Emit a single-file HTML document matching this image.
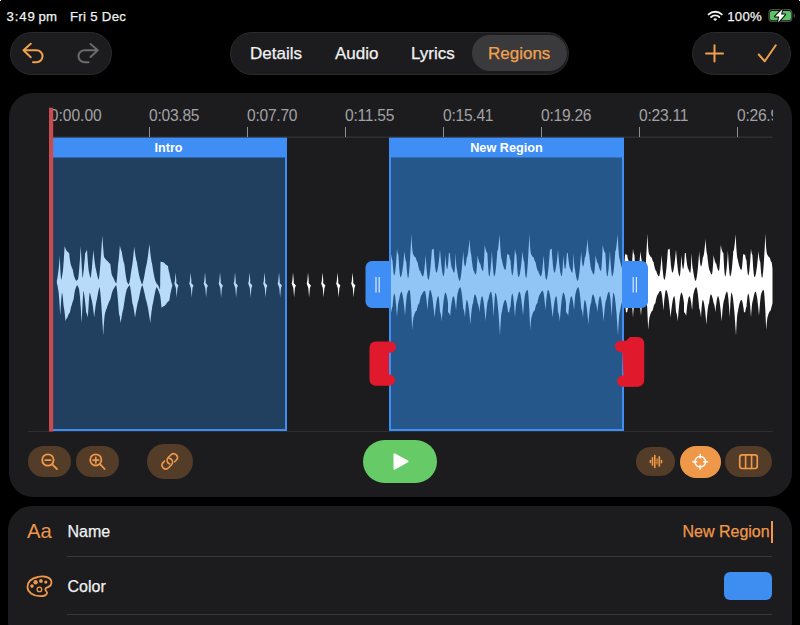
<!DOCTYPE html>
<html><head><meta charset="utf-8">
<style>
*{margin:0;padding:0;box-sizing:border-box}
html,body{width:800px;height:625px;background:#000;overflow:hidden;font-family:"Liberation Sans",sans-serif;color:#fff}
.a{position:absolute}
.pill{position:absolute;background:#1c1c1e;border:1px solid #2b2b2d;border-radius:22px}
.txt{position:absolute;white-space:nowrap;line-height:1;-webkit-text-stroke:0.25px currentColor}
.card{position:absolute;background:#1c1c1e;border-radius:24px}
.rt{position:absolute;font-size:15.6px;color:#a2a2a6;line-height:1;white-space:nowrap;letter-spacing:-0.25px}
.btn{position:absolute;background:#533c28;border-radius:16px}
svg{position:absolute;left:0;top:0}
</style></head><body>
<!-- status bar -->
<div class="txt" style="left:6.5px;top:9.7px;font-size:13.2px;color:#f2f2f2"><span style="letter-spacing:0.9px">3:49</span><span style="margin-left:2.6px;letter-spacing:0.3px">pm</span></div>
<div class="txt" style="left:70px;top:9.7px;font-size:13.2px;color:#f2f2f2;letter-spacing:0.3px">Fri 5 Dec</div>
<div class="txt" style="left:727.2px;top:9.7px;font-size:13.2px;color:#f2f2f2;letter-spacing:0.3px">100%</div>

<!-- top buttons -->
<div class="pill" style="left:10px;top:32px;width:102px;height:43px"></div>
<div class="pill" style="left:230px;top:32px;width:339px;height:43px"></div>
<div class="a" style="left:472px;top:35px;width:95px;height:36px;background:#3a3a3c;border-radius:18px"></div>
<div class="txt" style="left:250px;top:45px;font-size:17px;color:#f2f2f2">Details</div>
<div class="txt" style="left:335px;top:45px;font-size:17px;color:#f2f2f2">Audio</div>
<div class="txt" style="left:411px;top:45px;font-size:17px;color:#f2f2f2">Lyrics</div>
<div class="txt" style="left:488px;top:45px;font-size:17px;color:#f0a24e">Regions</div>
<div class="pill" style="left:692px;top:32px;width:99px;height:43px"></div>

<!-- timeline card -->
<div class="card" style="left:9px;top:92.6px;width:783px;height:404.8px"></div>
<div class="a" style="left:50px;top:100px;width:722.5px;height:30px;overflow:hidden">
  <div class="rt" style="left:-0.3px;top:8.4px;letter-spacing:0">0:00.00</div>
  <div class="rt" style="left:99px;top:8.4px">0:03.85</div>
  <div class="rt" style="left:197px;top:8.4px">0:07.70</div>
  <div class="rt" style="left:295px;top:8.4px">0:11.55</div>
  <div class="rt" style="left:393px;top:8.4px">0:15.41</div>
  <div class="rt" style="left:491px;top:8.4px">0:19.26</div>
  <div class="rt" style="left:589px;top:8.4px">0:23.11</div>
  <div class="rt" style="left:687px;top:8.4px">0:26.96</div>
</div>
<svg width="800" height="625" viewBox="0 0 800 625">
  <defs>
    <clipPath id="cl"><rect x="0" y="0" width="772.5" height="625"/></clipPath>
  </defs>
  <!-- ruler line & ticks -->
  <rect x="50" y="136.6" width="722.5" height="1" fill="#3a3a3c"/>
  <g fill="#8e8e93">
    <rect x="149" y="127" width="1" height="10"/><rect x="247" y="127" width="1" height="10"/>
    <rect x="345" y="127" width="1" height="10"/><rect x="443" y="127" width="1" height="10"/>
    <rect x="541" y="127" width="1" height="10"/><rect x="639" y="127" width="1" height="10"/>
    <rect x="737" y="127" width="1" height="10"/>
  </g>
  <!-- bottom line -->
  <rect x="28" y="431" width="744.5" height="1" fill="#2e2e30"/>
  <!-- intro region -->
  <rect x="49" y="137.6" width="238" height="293.4" fill="#3f8ef5"/>
  <rect x="51" y="157.5" width="234" height="271.5" fill="#213f5e"/>
  <text x="168.5" y="152" font-family="Liberation Sans" font-weight="bold" font-size="12.6" fill="#fff" text-anchor="middle">Intro</text>
  <!-- new region -->
  <rect x="389" y="137.6" width="235" height="293.4" fill="#3f8ef5"/>
  <rect x="391" y="157.5" width="231" height="271.5" fill="#25578a"/>
  <text x="506.5" y="152" font-family="Liberation Sans" font-weight="bold" font-size="12.7" fill="#fff" text-anchor="middle">New Region</text>
  <!-- waveforms -->
  <polygon points="56.9,279.9 57.1,279.4 57.3,278.5 57.5,277.5 57.7,276.3 57.8,275.0 58.0,273.7 58.3,272.1 58.6,269.6 58.9,266.6 59.2,263.3 59.5,259.7 59.8,255.8 60.0,261.0 60.2,266.0 60.4,270.5 60.6,274.5 60.9,277.8 61.1,279.9 61.4,279.1 61.7,277.9 62.0,276.4 62.3,274.8 62.6,272.9 62.9,271.0 63.1,268.8 63.4,265.3 63.7,261.2 64.0,256.5 64.3,251.4 64.6,245.9 64.9,246.9 65.2,247.8 65.5,248.6 65.8,249.4 66.1,250.0 66.4,250.4 66.9,251.0 67.3,251.5 67.8,252.0 68.2,252.5 68.7,252.8 69.1,253.1 69.4,255.6 69.7,258.0 70.0,260.2 70.3,262.1 70.6,263.7 70.9,264.7 71.2,265.7 71.5,266.6 71.8,267.4 72.1,268.2 72.4,268.8 72.7,269.2 73.0,271.0 73.3,272.6 73.6,274.1 73.9,275.4 74.2,276.5 74.5,277.3 74.8,278.0 75.1,278.8 75.4,279.4 75.7,280.0 76.0,280.5 76.3,280.8 76.6,280.7 76.9,280.4 77.2,280.1 77.5,279.8 77.8,279.4 78.1,279.0 78.5,276.1 79.0,271.5 79.4,266.0 79.9,259.9 80.3,253.1 80.8,245.9 81.1,252.9 81.4,259.5 81.7,265.5 82.0,270.8 82.3,275.3 82.6,278.2 83.0,275.9 83.4,272.5 83.9,268.3 84.3,263.6 84.8,258.5 85.2,253.1 85.5,252.8 85.8,252.3 86.1,251.7 86.4,251.0 86.7,250.3 87.0,249.5 87.3,254.2 87.6,258.6 87.9,262.6 88.2,266.1 88.5,269.1 88.8,271.0 89.1,272.6 89.4,274.0 89.7,275.3 90.0,276.5 90.3,277.5 90.6,278.2 91.1,275.6 91.5,271.6 92.0,266.9 92.4,261.6 92.9,255.7 93.3,249.5 93.7,253.8 94.2,257.8 94.6,261.5 95.1,264.7 95.5,267.4 96.0,269.2 96.4,271.5 96.9,273.7 97.3,275.7 97.8,277.5 98.2,279.0 98.7,279.9 99.3,276.0 99.9,269.8 100.5,262.4 101.1,254.0 101.7,244.9 102.3,235.2 102.6,239.9 102.9,244.2 103.2,248.2 103.5,251.8 103.7,254.7 104.0,256.7 104.3,257.2 104.6,257.8 104.9,258.3 105.2,258.7 105.5,259.1 105.8,259.3 106.1,259.7 106.4,260.1 106.7,260.4 107.0,260.7 107.3,261.0 107.6,261.1 108.1,261.7 108.5,262.3 109.0,262.8 109.4,263.2 109.9,263.6 110.3,263.8 110.6,266.2 110.8,268.4 111.1,270.4 111.3,272.1 111.5,273.6 111.8,274.6 112.1,275.4 112.4,276.1 112.7,276.7 113.0,277.3 113.3,277.8 113.6,278.2 114.0,279.3 114.5,280.4 114.9,281.4 115.4,282.3 115.8,283.0 116.3,283.5 116.6,281.8 116.9,279.1 117.2,275.8 117.5,272.1 117.8,268.1 118.1,263.8 118.4,262.1 118.7,259.6 119.0,256.4 119.3,252.9 119.6,249.1 119.9,245.0 120.1,246.4 120.4,247.7 120.7,248.8 121.0,249.9 121.3,250.7 121.6,251.3 122.1,254.0 122.5,256.6 123.0,258.9 123.4,261.0 123.9,262.7 124.3,263.8 124.8,267.7 125.2,271.4 125.7,274.7 126.1,277.7 126.6,280.1 127.0,281.7 127.3,282.3 127.6,282.9 127.9,283.4 128.2,283.8 128.5,284.2 128.8,284.4 129.3,283.1 129.7,281.0 130.2,278.4 130.6,275.6 131.0,272.5 131.5,269.2 131.9,267.2 132.4,264.1 132.8,260.4 133.3,256.2 133.7,251.7 134.2,246.8 134.6,250.1 135.1,253.2 135.5,256.1 136.0,258.6 136.4,260.7 136.9,262.0 137.5,265.9 138.1,269.6 138.7,272.9 139.3,275.9 139.9,278.3 140.4,279.9 140.7,280.9 141.0,281.8 141.3,282.7 141.6,283.4 141.9,284.0 142.2,284.4 142.8,282.9 143.4,280.6 144.0,277.7 144.6,274.6 145.2,271.1 145.8,267.4 146.4,265.3 147.0,262.1 147.6,258.3 148.2,253.9 148.8,249.2 149.4,244.1 149.9,248.4 150.3,252.4 150.7,256.1 151.2,259.4 151.6,262.1 152.1,263.8 152.7,267.7 153.3,271.4 153.9,274.7 154.5,277.7 155.1,280.1 155.7,281.7 156.0,282.3 156.3,282.9 156.6,283.4 156.9,283.8 157.2,284.2 157.5,284.4 157.9,284.9 158.3,285.7 158.7,286.6 159.2,287.6 159.6,288.8 160.0,290.0 160.1,287.5 160.2,283.6 160.2,278.9 160.3,273.6 160.4,267.8 160.5,261.6 161.0,261.8 161.5,261.9 162.1,262.1 162.6,262.2 163.1,262.3 163.6,262.3 164.4,263.1 165.1,263.9 165.8,264.5 166.5,265.1 167.2,265.6 168.0,265.9 168.2,267.5 168.4,269.0 168.7,270.3 168.9,271.5 169.2,272.5 169.4,273.1 169.9,275.7 170.4,278.0 170.9,280.1 171.3,282.1 171.8,283.6 172.3,284.7 172.3,286.1 172.1,286.6 171.8,287.4 171.6,288.4 171.3,289.4 171.1,290.6 170.9,291.9 170.6,292.6 170.4,293.8 170.1,295.3 169.9,296.9 169.6,298.6 169.4,300.5 168.7,301.0 168.0,301.7 167.2,302.5 166.5,303.4 165.8,304.5 165.1,305.6 164.5,305.8 163.9,306.1 163.3,306.4 162.7,306.8 162.1,307.3 161.5,307.7 161.2,304.9 161.0,302.4 160.7,300.0 160.5,297.9 160.2,296.1 160.0,295.0 159.4,293.3 158.9,291.7 158.3,290.2 157.7,288.9 157.1,287.8 156.6,287.1 156.0,288.5 155.4,290.8 154.8,293.4 154.2,296.4 153.6,299.7 153.0,303.2 152.5,305.0 152.1,307.7 151.6,311.0 151.2,314.6 150.7,318.6 150.3,322.9 149.6,317.9 148.8,313.1 148.1,308.8 147.3,304.9 146.6,301.7 145.8,299.6 145.2,296.5 144.6,293.6 144.0,290.9 143.4,288.6 142.8,286.6 142.2,285.3 141.6,286.6 141.0,288.6 140.4,290.9 139.9,293.6 139.3,296.5 138.7,299.6 138.1,301.2 137.5,303.7 136.9,306.7 136.3,310.0 135.7,313.6 135.1,317.6 134.6,314.4 134.2,311.5 133.7,308.8 133.3,306.5 132.8,304.5 132.4,303.2 131.9,299.3 131.5,295.7 131.0,292.3 130.6,289.4 130.2,286.9 129.7,285.3 129.3,285.6 128.8,286.1 128.4,286.7 127.9,287.4 127.5,288.1 127.0,288.9 126.4,290.7 125.8,293.4 125.2,296.6 124.6,300.3 124.0,304.3 123.4,308.6 123.0,309.9 122.5,311.9 122.1,314.2 121.6,316.9 121.2,319.8 120.7,322.9 120.4,321.0 120.1,319.2 119.9,317.5 119.6,316.0 119.3,314.8 119.0,314.0 118.5,307.7 118.1,301.9 117.6,296.6 117.2,291.8 116.7,287.9 116.3,285.3 115.8,285.6 115.4,286.1 114.9,286.7 114.5,287.4 114.0,288.1 113.6,288.9 113.0,289.9 112.5,291.3 111.9,293.1 111.4,295.1 110.9,297.3 110.3,299.6 109.7,300.4 109.1,301.7 108.5,303.2 107.9,304.8 107.3,306.6 106.7,308.6 106.4,309.1 106.1,309.8 105.8,310.7 105.5,311.7 105.2,312.8 104.9,314.0 104.6,315.9 104.3,318.9 104.0,322.4 103.7,326.4 103.5,330.8 103.2,335.5 102.6,324.9 102.0,315.1 101.4,306.1 100.8,298.1 100.2,291.4 99.6,287.1 99.1,288.2 98.7,290.0 98.2,292.0 97.8,294.4 97.3,296.9 96.9,299.6 96.4,301.2 96.0,303.7 95.5,306.7 95.1,310.0 94.6,313.6 94.2,317.6 93.7,313.6 93.3,310.0 92.9,306.7 92.4,303.7 92.0,301.2 91.5,299.6 91.2,298.1 90.9,296.6 90.6,295.3 90.3,294.1 90.0,293.1 89.7,292.5 89.4,294.7 89.1,298.2 88.8,302.3 88.5,307.0 88.2,312.1 87.9,317.6 87.6,316.4 87.3,315.3 87.0,314.3 86.7,313.4 86.4,312.7 86.1,312.2 85.7,307.5 85.2,303.1 84.8,299.1 84.3,295.6 83.9,292.6 83.4,290.7 83.2,293.6 82.9,298.0 82.6,303.3 82.3,309.3 82.0,315.9 81.7,322.9 81.2,315.5 80.8,308.6 80.3,302.2 79.9,296.6 79.4,291.9 79.0,288.9 78.7,288.1 78.4,287.4 78.1,286.7 77.8,286.1 77.5,285.6 77.2,285.3 76.9,285.6 76.6,286.1 76.3,286.7 76.0,287.4 75.7,288.1 75.4,288.9 75.1,289.9 74.8,291.3 74.5,293.1 74.2,295.1 73.9,297.3 73.6,299.6 73.3,300.1 73.0,300.9 72.7,301.8 72.4,302.8 72.1,303.8 71.8,305.0 71.5,305.7 71.2,306.6 70.9,307.8 70.6,309.2 70.3,310.6 70.0,312.2 69.6,312.7 69.1,313.4 68.7,314.3 68.2,315.3 67.8,316.4 67.3,317.6 67.0,317.9 66.7,318.4 66.4,319.0 66.1,319.6 65.8,320.4 65.5,321.1 65.2,318.0 64.9,315.1 64.6,312.4 64.3,310.1 64.0,308.1 63.7,306.8 63.4,303.7 63.1,300.8 62.9,298.1 62.6,295.7 62.3,293.8 62.0,292.5 61.7,294.6 61.4,297.8 61.1,301.6 60.8,306.0 60.5,310.7 60.2,315.8 59.9,310.3 59.6,305.2 59.3,300.5 59.0,296.4 58.7,292.9 58.4,290.7 58.1,289.1 57.9,287.7 57.7,286.3 57.4,285.2 57.2,284.2 56.9,283.5" fill="#b7dbf8"/>
  <g fill="#b7dbf8"><polygon points="175.6,272.5 176.4,281.0 176.2,283.0 178.5,285.5 177.5,288.0 176.7,297.5 175.9,288.0 174.3,283.5 174.9,281.0"/><polygon points="190.6,272.5 191.4,281.0 191.2,283.0 193.5,285.5 192.5,288.0 191.7,297.5 190.9,288.0 189.3,283.5 189.9,281.0"/><polygon points="205.0,272.5 205.8,281.0 205.6,283.0 207.9,285.5 206.9,288.0 206.1,297.5 205.3,288.0 203.7,283.5 204.3,281.0"/><polygon points="220.0,272.5 220.8,281.0 220.6,283.0 222.9,285.5 221.9,288.0 221.1,297.5 220.3,288.0 218.7,283.5 219.3,281.0"/><polygon points="235.0,272.5 235.8,281.0 235.6,283.0 237.9,285.5 236.9,288.0 236.1,297.5 235.3,288.0 233.7,283.5 234.3,281.0"/><polygon points="249.5,272.5 250.3,281.0 250.1,283.0 252.4,285.5 251.4,288.0 250.6,297.5 249.8,288.0 248.2,283.5 248.8,281.0"/><polygon points="264.5,272.5 265.3,281.0 265.1,283.0 267.4,285.5 266.4,288.0 265.6,297.5 264.8,288.0 263.2,283.5 263.8,281.0"/><polygon points="279.0,272.5 279.8,281.0 279.6,283.0 281.9,285.5 280.9,288.0 280.1,297.5 279.3,288.0 277.7,283.5 278.3,281.0"/></g>
  <g fill="#ffffff"><polygon points="293.0,272.5 293.8,281.0 293.6,283.0 295.9,285.5 294.9,288.0 294.1,297.5 293.3,288.0 291.7,283.5 292.3,281.0"/><polygon points="308.0,272.5 308.8,281.0 308.6,283.0 310.9,285.5 309.9,288.0 309.1,297.5 308.3,288.0 306.7,283.5 307.3,281.0"/><polygon points="322.5,272.5 323.3,281.0 323.1,283.0 325.4,285.5 324.4,288.0 323.6,297.5 322.8,288.0 321.2,283.5 321.8,281.0"/><polygon points="337.5,272.5 338.3,281.0 338.1,283.0 340.4,285.5 339.4,288.0 338.6,297.5 337.8,288.0 336.2,283.5 336.8,281.0"/><polygon points="352.5,272.5 353.3,281.0 353.1,283.0 355.4,285.5 354.4,288.0 353.6,297.5 352.8,288.0 351.2,283.5 351.8,281.0"/></g>
  <clipPath id="cnr"><rect x="391" y="158" width="231" height="271"/></clipPath>
  <clipPath id="cwh"><rect x="624" y="158" width="148.5" height="271"/></clipPath>
  <polygon points="391.0,254.9 391.0,254.9 391.1,254.9 391.1,254.9 391.2,254.9 391.2,254.9 391.2,254.9 391.4,256.4 391.6,257.7 391.9,258.7 392.1,259.5 392.3,260.0 392.5,260.3 392.8,264.5 393.1,268.1 393.4,271.1 393.7,273.4 394.0,274.9 394.3,275.5 394.7,274.4 395.2,271.8 395.6,267.8 396.1,262.5 396.5,256.1 397.0,248.6 397.2,250.4 397.4,251.9 397.7,253.1 397.9,254.0 398.2,254.6 398.4,254.9 398.8,261.1 399.1,266.5 399.5,270.9 399.8,274.2 400.2,276.4 400.5,277.3 401.2,276.3 401.9,273.7 402.5,269.8 403.2,264.8 403.8,258.6 404.5,251.3 404.8,254.3 405.1,256.9 405.4,259.0 405.7,260.6 406.0,261.6 406.3,262.1 406.6,266.6 406.9,270.4 407.2,273.5 407.5,275.9 407.8,277.5 408.1,278.2 408.6,276.4 409.1,272.0 409.7,265.3 410.2,256.6 410.8,245.9 411.3,233.4 411.6,239.1 411.9,244.1 412.2,248.1 412.5,251.1 412.8,253.2 413.1,254.0 413.5,255.0 414.0,255.8 414.4,256.5 414.9,257.1 415.3,257.4 415.8,257.6 416.1,258.8 416.4,259.9 416.7,260.8 417.0,261.4 417.3,261.9 417.6,262.1 418.0,264.6 418.5,266.7 418.9,268.4 419.4,269.8 419.8,270.7 420.3,271.0 420.7,272.5 421.2,273.8 421.6,274.8 422.1,275.6 422.5,276.2 422.9,276.4 423.4,275.5 423.8,273.4 424.3,270.2 424.7,266.0 425.2,260.9 425.6,254.9 426.1,261.9 426.5,267.9 427.0,272.8 427.4,276.5 427.9,279.0 428.3,280.0 428.9,278.8 429.5,275.8 430.1,271.2 430.7,265.3 431.3,258.0 431.9,249.5 432.2,249.5 432.5,249.4 432.8,249.2 433.1,249.1 433.4,248.9 433.7,248.6 434.1,255.4 434.6,261.1 435.0,265.9 435.5,269.5 435.9,271.8 436.4,272.8 437.0,271.9 437.6,269.6 438.2,266.1 438.8,261.6 439.4,256.0 440.0,249.5 440.6,257.0 441.2,263.4 441.8,268.7 442.4,272.7 443.0,275.3 443.6,276.4 443.9,275.5 444.2,273.4 444.5,270.2 444.8,266.0 445.0,260.9 445.3,254.9 445.6,258.9 445.9,262.3 446.2,265.1 446.5,267.2 446.8,268.6 447.1,269.2 447.4,268.6 447.7,267.0 448.0,264.6 448.3,261.4 448.6,257.6 448.9,253.1 449.1,253.1 449.2,253.1 449.4,253.1 449.5,253.1 449.6,253.1 449.8,253.1 450.2,257.6 450.7,261.4 451.1,264.6 451.6,267.0 452.0,268.6 452.5,269.2 452.8,270.2 453.1,271.1 453.4,271.8 453.7,272.3 454.0,272.7 454.3,272.8 454.5,272.0 454.7,270.1 454.9,267.1 455.1,263.3 455.3,258.6 455.5,253.1 455.8,257.6 456.0,261.4 456.2,264.6 456.5,267.0 456.7,268.6 457.0,269.2 457.4,272.5 457.9,275.3 458.3,277.5 458.8,279.3 459.2,280.4 459.6,280.9 460.2,279.7 460.8,276.8 461.4,272.4 462.0,266.6 462.6,259.6 463.2,251.3 463.5,255.6 463.8,259.2 464.1,262.2 464.4,264.4 464.7,265.9 465.0,266.5 465.3,266.2 465.6,265.3 465.9,264.0 466.2,262.2 466.5,260.1 466.8,257.6 467.3,256.8 467.7,255.0 468.2,252.2 468.6,248.5 469.1,244.0 469.5,238.8 469.8,243.3 470.1,247.1 470.4,250.2 470.7,252.6 471.0,254.2 471.3,254.9 471.7,259.4 472.2,263.2 472.6,266.4 473.1,268.8 473.5,270.4 474.0,271.0 474.3,272.0 474.6,272.9 474.9,273.6 475.2,274.1 475.5,274.5 475.8,274.6 476.1,273.8 476.4,271.9 476.7,268.9 477.0,265.1 477.3,260.4 477.6,254.9 478.0,257.4 478.5,259.5 478.9,261.3 479.4,262.6 479.8,263.5 480.3,263.8 480.7,265.8 481.2,267.6 481.6,269.0 482.1,270.0 482.5,270.7 482.9,271.0 483.2,270.0 483.5,267.4 483.8,263.5 484.1,258.5 484.4,252.3 484.7,245.0 485.2,247.3 485.6,249.2 486.1,250.8 486.5,252.0 487.0,252.8 487.4,253.1 487.7,259.6 488.0,265.2 488.3,269.7 488.6,273.2 488.9,275.5 489.2,276.4 489.7,275.4 490.1,272.8 490.6,268.9 491.0,263.9 491.5,257.7 491.9,250.4 492.3,257.7 492.7,263.9 493.1,268.9 493.5,272.8 493.8,275.4 494.2,276.4 494.7,275.4 495.3,272.9 495.8,269.2 496.3,264.3 496.8,258.3 497.3,251.3 497.7,250.6 498.1,248.9 498.4,246.4 498.8,243.1 499.2,239.0 499.6,234.3 500.0,241.3 500.3,247.3 500.7,252.2 501.0,255.9 501.4,258.4 501.8,259.4 502.4,262.4 503.0,264.9 503.6,267.0 504.2,268.6 504.8,269.7 505.3,270.1 505.6,269.5 505.9,267.9 506.2,265.5 506.5,262.3 506.8,258.5 507.1,254.0 507.5,254.2 507.8,254.4 508.2,254.6 508.5,254.8 508.9,254.8 509.2,254.9 509.4,256.4 509.6,257.7 509.9,258.7 510.1,259.5 510.3,260.0 510.5,260.3 510.8,264.5 511.1,268.1 511.4,271.1 511.7,273.4 512.0,274.9 512.3,275.5 512.7,274.4 513.2,271.8 513.6,267.8 514.1,262.5 514.5,256.1 515.0,248.6 515.2,250.4 515.4,251.9 515.7,253.1 515.9,254.0 516.2,254.6 516.4,254.9 516.8,261.1 517.1,266.5 517.5,270.9 517.8,274.2 518.2,276.4 518.5,277.3 519.2,276.3 519.9,273.7 520.5,269.8 521.2,264.8 521.8,258.6 522.5,251.3 522.8,254.3 523.1,256.9 523.4,259.0 523.7,260.6 524.0,261.6 524.3,262.1 524.6,266.6 524.9,270.4 525.2,273.5 525.5,275.9 525.8,277.5 526.1,278.2 526.6,276.4 527.1,272.0 527.7,265.3 528.2,256.6 528.8,245.9 529.3,233.4 529.6,239.1 529.9,244.1 530.2,248.1 530.5,251.1 530.8,253.2 531.1,254.0 531.5,255.0 532.0,255.8 532.4,256.5 532.9,257.1 533.3,257.4 533.8,257.6 534.1,258.8 534.4,259.9 534.7,260.8 535.0,261.4 535.3,261.9 535.6,262.1 536.0,264.6 536.5,266.7 536.9,268.4 537.4,269.8 537.8,270.7 538.3,271.0 538.7,272.5 539.2,273.8 539.6,274.8 540.1,275.6 540.5,276.2 540.9,276.4 541.4,275.5 541.8,273.4 542.3,270.2 542.7,266.0 543.2,260.9 543.6,254.9 544.1,261.9 544.5,267.9 545.0,272.8 545.4,276.5 545.9,279.0 546.3,280.0 546.9,278.8 547.5,275.8 548.1,271.2 548.7,265.3 549.3,258.0 549.9,249.5 550.2,249.5 550.5,249.4 550.8,249.2 551.1,249.1 551.4,248.9 551.7,248.6 552.1,255.4 552.6,261.1 553.0,265.9 553.5,269.5 553.9,271.8 554.4,272.8 555.0,271.9 555.6,269.6 556.2,266.1 556.8,261.6 557.4,256.0 558.0,249.5 558.6,257.0 559.2,263.4 559.8,268.7 560.4,272.7 561.0,275.3 561.6,276.4 561.9,275.5 562.2,273.4 562.5,270.2 562.8,266.0 563.0,260.9 563.3,254.9 563.6,258.9 563.9,262.3 564.2,265.1 564.5,267.2 564.8,268.6 565.1,269.2 565.4,268.6 565.7,267.0 566.0,264.6 566.3,261.4 566.6,257.6 566.9,253.1 567.1,253.1 567.2,253.1 567.4,253.1 567.5,253.1 567.6,253.1 567.8,253.1 568.2,257.6 568.7,261.4 569.1,264.6 569.6,267.0 570.0,268.6 570.5,269.2 570.8,270.2 571.1,271.1 571.4,271.8 571.7,272.3 572.0,272.7 572.3,272.8 572.5,272.0 572.7,270.1 572.9,267.1 573.1,263.3 573.3,258.6 573.5,253.1 573.8,257.6 574.0,261.4 574.2,264.6 574.5,267.0 574.7,268.6 575.0,269.2 575.4,272.5 575.9,275.3 576.3,277.5 576.8,279.3 577.2,280.4 577.6,280.9 578.2,279.7 578.8,276.8 579.4,272.4 580.0,266.6 580.6,259.6 581.2,251.3 581.5,255.6 581.8,259.2 582.1,262.2 582.4,264.4 582.7,265.9 583.0,266.5 583.3,266.2 583.6,265.3 583.9,264.0 584.2,262.2 584.5,260.1 584.8,257.6 585.3,256.8 585.7,255.0 586.2,252.2 586.6,248.5 587.1,244.0 587.5,238.8 587.8,243.3 588.1,247.1 588.4,250.2 588.7,252.6 589.0,254.2 589.3,254.9 589.7,259.4 590.2,263.2 590.6,266.4 591.1,268.8 591.5,270.4 592.0,271.0 592.3,272.0 592.6,272.9 592.9,273.6 593.2,274.1 593.5,274.5 593.8,274.6 594.1,273.8 594.4,271.9 594.7,268.9 595.0,265.1 595.3,260.4 595.6,254.9 596.0,257.4 596.5,259.5 596.9,261.3 597.4,262.6 597.8,263.5 598.3,263.8 598.7,265.8 599.2,267.6 599.6,269.0 600.1,270.0 600.5,270.7 600.9,271.0 601.2,270.0 601.5,267.4 601.8,263.5 602.1,258.5 602.4,252.3 602.7,245.0 603.2,247.3 603.6,249.2 604.1,250.8 604.5,252.0 605.0,252.8 605.4,253.1 605.7,259.6 606.0,265.2 606.3,269.7 606.6,273.2 606.9,275.5 607.2,276.4 607.7,275.4 608.1,272.8 608.6,268.9 609.0,263.9 609.5,257.7 609.9,250.4 610.3,257.7 610.7,263.9 611.1,268.9 611.5,272.8 611.8,275.4 612.2,276.4 612.7,275.4 613.3,272.9 613.8,269.2 614.3,264.3 614.8,258.3 615.3,251.3 615.7,250.6 616.1,248.9 616.4,246.4 616.8,243.1 617.2,239.0 617.6,234.3 618.0,241.3 618.3,247.3 618.7,252.2 619.0,255.9 619.4,258.4 619.8,259.4 620.4,262.4 621.0,264.9 621.6,267.0 622.2,268.6 622.8,269.7 623.3,270.1 623.6,269.5 623.9,267.9 624.2,265.5 624.5,262.3 624.8,258.5 625.1,254.0 625.5,254.2 625.8,254.4 626.2,254.6 626.5,254.8 626.9,254.8 627.2,254.9 627.4,256.4 627.6,257.7 627.9,258.7 628.1,259.5 628.3,260.0 628.5,260.3 628.8,264.5 629.1,268.1 629.4,271.1 629.7,273.4 630.0,274.9 630.3,275.5 630.7,274.4 631.2,271.8 631.6,267.8 632.1,262.5 632.5,256.1 633.0,248.6 633.2,250.4 633.4,251.9 633.7,253.1 633.9,254.0 634.2,254.6 634.4,254.9 634.8,261.1 635.1,266.5 635.5,270.9 635.8,274.2 636.2,276.4 636.5,277.3 637.2,276.3 637.9,273.7 638.5,269.8 639.2,264.8 639.8,258.6 640.5,251.3 640.8,254.3 641.1,256.9 641.4,259.0 641.7,260.6 642.0,261.6 642.3,262.1 642.6,266.6 642.9,270.4 643.2,273.5 643.5,275.9 643.8,277.5 644.1,278.2 644.6,276.4 645.1,272.0 645.7,265.3 646.2,256.6 646.8,245.9 647.3,233.4 647.6,239.1 647.9,244.1 648.2,248.1 648.5,251.1 648.8,253.2 649.1,254.0 649.5,255.0 650.0,255.8 650.4,256.5 650.9,257.1 651.3,257.4 651.8,257.6 652.1,258.8 652.4,259.9 652.7,260.8 653.0,261.4 653.3,261.9 653.6,262.1 654.0,264.6 654.5,266.7 654.9,268.4 655.4,269.8 655.8,270.7 656.3,271.0 656.7,272.5 657.2,273.8 657.6,274.8 658.1,275.6 658.5,276.2 658.9,276.4 659.4,275.5 659.8,273.4 660.3,270.2 660.7,266.0 661.2,260.9 661.6,254.9 662.1,261.9 662.5,267.9 663.0,272.8 663.4,276.5 663.9,279.0 664.3,280.0 664.9,278.8 665.5,275.8 666.1,271.2 666.7,265.3 667.3,258.0 667.9,249.5 668.2,249.5 668.5,249.4 668.8,249.2 669.1,249.1 669.4,248.9 669.7,248.6 670.1,255.4 670.6,261.1 671.0,265.9 671.5,269.5 671.9,271.8 672.4,272.8 673.0,271.9 673.6,269.6 674.2,266.1 674.8,261.6 675.4,256.0 676.0,249.5 676.6,257.0 677.2,263.4 677.8,268.7 678.4,272.7 679.0,275.3 679.6,276.4 679.9,275.5 680.2,273.4 680.5,270.2 680.8,266.0 681.0,260.9 681.3,254.9 681.6,258.9 681.9,262.3 682.2,265.1 682.5,267.2 682.8,268.6 683.1,269.2 683.4,268.6 683.7,267.0 684.0,264.6 684.3,261.4 684.6,257.6 684.9,253.1 685.1,253.1 685.2,253.1 685.4,253.1 685.5,253.1 685.6,253.1 685.8,253.1 686.2,257.6 686.7,261.4 687.1,264.6 687.6,267.0 688.0,268.6 688.5,269.2 688.8,270.2 689.1,271.1 689.4,271.8 689.7,272.3 690.0,272.7 690.3,272.8 690.5,272.0 690.7,270.1 690.9,267.1 691.1,263.3 691.3,258.6 691.5,253.1 691.8,257.6 692.0,261.4 692.2,264.6 692.5,267.0 692.7,268.6 693.0,269.2 693.4,272.5 693.9,275.3 694.3,277.5 694.8,279.3 695.2,280.4 695.6,280.9 696.2,279.7 696.8,276.8 697.4,272.4 698.0,266.6 698.6,259.6 699.2,251.3 699.5,255.6 699.8,259.2 700.1,262.2 700.4,264.4 700.7,265.9 701.0,266.5 701.3,266.2 701.6,265.3 701.9,264.0 702.2,262.2 702.5,260.1 702.8,257.6 703.3,256.8 703.7,255.0 704.2,252.2 704.6,248.5 705.1,244.0 705.5,238.8 705.8,243.3 706.1,247.1 706.4,250.2 706.7,252.6 707.0,254.2 707.3,254.9 707.7,259.4 708.2,263.2 708.6,266.4 709.1,268.8 709.5,270.4 710.0,271.0 710.3,272.0 710.6,272.9 710.9,273.6 711.2,274.1 711.5,274.5 711.8,274.6 712.1,273.8 712.4,271.9 712.7,268.9 713.0,265.1 713.3,260.4 713.6,254.9 714.0,257.4 714.5,259.5 714.9,261.3 715.4,262.6 715.8,263.5 716.3,263.8 716.7,265.8 717.2,267.6 717.6,269.0 718.1,270.0 718.5,270.7 718.9,271.0 719.2,270.0 719.5,267.4 719.8,263.5 720.1,258.5 720.4,252.3 720.7,245.0 721.2,247.3 721.6,249.2 722.1,250.8 722.5,252.0 723.0,252.8 723.4,253.1 723.7,259.6 724.0,265.2 724.3,269.7 724.6,273.2 724.9,275.5 725.2,276.4 725.7,275.4 726.1,272.8 726.6,268.9 727.0,263.9 727.5,257.7 727.9,250.4 728.3,257.7 728.7,263.9 729.1,268.9 729.5,272.8 729.8,275.4 730.2,276.4 730.7,275.4 731.3,272.9 731.8,269.2 732.3,264.3 732.8,258.3 733.3,251.3 733.7,250.6 734.1,248.9 734.4,246.4 734.8,243.1 735.2,239.0 735.6,234.3 736.0,241.3 736.3,247.3 736.7,252.2 737.0,255.9 737.4,258.4 737.8,259.4 738.4,262.4 739.0,264.9 739.6,267.0 740.2,268.6 740.8,269.7 741.3,270.1 741.6,269.5 741.9,267.9 742.2,265.5 742.5,262.3 742.8,258.5 743.1,254.0 743.5,254.2 743.8,254.4 744.2,254.6 744.5,254.8 744.9,254.8 745.2,254.9 745.4,256.4 745.6,257.7 745.9,258.7 746.1,259.5 746.3,260.0 746.5,260.3 746.8,264.5 747.1,268.1 747.4,271.1 747.7,273.4 748.0,274.9 748.3,275.5 748.7,274.4 749.2,271.8 749.6,267.8 750.1,262.5 750.5,256.1 751.0,248.6 751.2,250.4 751.4,251.9 751.7,253.1 751.9,254.0 752.2,254.6 752.4,254.9 752.8,261.1 753.1,266.5 753.5,270.9 753.8,274.2 754.2,276.4 754.5,277.3 755.2,276.3 755.9,273.7 756.5,269.8 757.2,264.8 757.8,258.6 758.5,251.3 758.8,254.3 759.1,256.9 759.4,259.0 759.7,260.6 760.0,261.6 760.3,262.1 760.6,266.6 760.9,270.4 761.2,273.5 761.5,275.9 761.8,277.5 762.1,278.2 762.6,276.4 763.1,272.0 763.7,265.3 764.2,256.6 764.8,245.9 765.3,233.4 765.6,239.1 765.9,244.1 766.2,248.1 766.5,251.1 766.8,253.2 767.1,254.0 767.5,255.0 768.0,255.8 768.4,256.5 768.9,257.1 769.3,257.4 769.8,257.6 770.1,258.8 770.4,259.9 770.7,260.8 771.0,261.4 771.3,261.9 771.6,262.1 772.0,264.6 772.5,266.7 772.9,268.4 773.4,269.8 773.8,270.7 774.3,271.0 774.7,272.5 775.2,273.8 775.6,274.8 776.1,275.6 776.5,276.2 776.9,276.4 777.4,275.5 777.8,273.4 778.3,270.2 778.7,266.0 779.2,260.9 779.6,254.9 778.7,290.7 778.3,290.9 777.8,291.2 777.4,291.8 776.9,292.5 776.5,293.3 776.1,294.3 775.6,294.7 775.2,295.5 774.7,296.9 774.3,298.6 773.8,300.8 773.4,303.3 772.9,303.6 772.5,304.3 772.0,305.3 771.6,306.7 771.1,308.4 770.7,310.4 770.2,310.7 769.8,311.2 769.3,312.0 768.9,313.0 768.4,314.3 768.0,315.8 767.7,316.4 767.4,317.8 767.1,319.9 766.8,322.7 766.5,326.1 766.2,330.2 765.7,318.9 765.3,309.3 764.8,301.4 764.4,295.4 764.0,291.4 763.5,289.8 763.2,289.9 762.9,290.2 762.6,290.6 762.3,291.1 762.0,291.8 761.7,292.5 761.3,293.4 760.8,295.7 760.4,299.2 759.9,303.7 759.5,309.3 759.0,315.8 758.4,309.0 757.8,303.3 757.2,298.6 756.6,295.0 756.0,292.6 755.4,291.6 755.1,291.9 754.7,292.7 754.3,293.9 753.9,295.5 753.5,297.4 753.1,299.7 752.8,300.4 752.4,302.2 752.0,304.8 751.7,308.3 751.3,312.6 751.0,317.6 750.5,310.8 750.1,305.1 749.6,300.4 749.2,296.8 748.7,294.4 748.3,293.4 748.0,293.9 747.7,295.3 747.4,297.3 747.1,299.9 746.8,303.1 746.5,306.9 746.3,307.1 746.1,307.6 745.9,308.4 745.6,309.4 745.4,310.7 745.2,312.2 745.0,312.2 744.8,312.2 744.6,312.2 744.4,312.2 744.2,312.2 744.0,312.2 743.6,308.7 743.1,305.7 742.7,303.3 742.2,301.4 741.8,300.2 741.3,299.7 740.8,300.2 740.2,301.4 739.6,303.3 739.0,305.7 738.4,308.7 737.8,312.2 737.5,313.2 737.2,315.5 736.9,318.9 736.6,323.5 736.3,329.0 736.0,335.5 735.2,323.5 734.5,313.2 733.7,304.9 733.0,298.5 732.2,294.2 731.5,292.5 731.2,293.5 730.9,296.0 730.6,299.7 730.3,304.6 730.0,310.6 729.7,317.6 729.3,310.3 728.8,304.1 728.4,299.1 727.9,295.2 727.5,292.7 727.0,291.6 726.6,291.9 726.1,292.7 725.7,293.9 725.2,295.5 724.8,297.4 724.3,299.7 723.9,300.5 723.4,302.7 723.0,305.9 722.5,310.0 722.1,315.2 721.6,321.2 721.0,314.2 720.4,308.2 719.8,303.3 719.2,299.6 718.6,297.1 718.1,296.1 717.6,296.7 717.2,298.3 716.7,300.7 716.3,303.9 715.8,307.7 715.4,312.2 715.1,309.7 714.8,307.6 714.5,305.8 714.2,304.5 713.9,303.6 713.6,303.3 713.1,300.8 712.7,298.6 712.2,296.9 711.8,295.5 711.3,294.7 710.9,294.3 710.6,294.7 710.3,295.5 710.0,296.9 709.7,298.6 709.4,300.8 709.1,303.3 708.6,304.1 708.2,306.2 707.7,309.4 707.3,313.6 706.8,318.8 706.4,324.8 705.8,317.8 705.2,311.8 704.6,306.9 704.0,303.2 703.4,300.7 702.8,299.7 702.5,300.4 702.2,302.2 701.9,304.8 701.6,308.3 701.3,312.6 701.0,317.6 700.7,315.1 700.4,313.0 700.1,311.2 699.8,309.9 699.5,309.0 699.2,308.6 698.7,302.6 698.2,297.5 697.7,293.3 697.2,290.1 696.7,288.0 696.2,287.1 695.8,287.4 695.4,287.9 695.0,288.7 694.6,289.7 694.2,291.0 693.9,292.5 693.6,293.2 693.3,295.0 693.0,297.7 692.7,301.2 692.4,305.4 692.1,310.4 691.6,306.4 691.2,303.0 690.7,300.2 690.3,298.1 689.8,296.7 689.4,296.1 688.8,296.9 688.3,298.8 687.8,301.8 687.2,305.6 686.7,310.3 686.2,315.8 685.8,314.8 685.4,314.0 685.1,313.3 684.7,312.7 684.4,312.4 684.0,312.2 684.0,309.7 684.0,307.6 684.0,305.8 684.0,304.5 684.0,303.6 684.0,303.3 683.6,300.3 683.1,297.7 682.7,295.6 682.2,294.0 681.8,292.9 681.3,292.5 680.8,293.7 680.2,296.5 679.6,300.8 679.0,306.3 678.4,313.2 677.8,321.2 677.5,318.7 677.2,316.5 676.9,314.8 676.6,313.5 676.3,312.6 676.0,312.2 675.7,307.7 675.4,303.9 675.1,300.7 674.8,298.3 674.5,296.7 674.2,296.1 673.6,297.0 673.0,299.1 672.4,302.3 671.8,306.5 671.2,311.6 670.6,317.6 669.8,309.8 669.1,303.2 668.4,297.8 667.6,293.7 666.9,290.9 666.1,289.8 665.7,290.6 665.2,292.7 664.8,295.7 664.3,299.8 663.9,304.7 663.4,310.4 663.0,304.9 662.5,300.2 662.1,296.4 661.6,293.5 661.2,291.5 660.7,290.7 660.3,290.9 659.8,291.2 659.4,291.8 658.9,292.5 658.5,293.3 658.1,294.3 657.6,294.7 657.2,295.5 656.7,296.9 656.3,298.6 655.8,300.8 655.4,303.3 654.9,303.6 654.5,304.3 654.0,305.3 653.6,306.7 653.1,308.4 652.7,310.4 652.2,310.7 651.8,311.2 651.3,312.0 650.9,313.0 650.4,314.3 650.0,315.8 649.7,316.4 649.4,317.8 649.1,319.9 648.8,322.7 648.5,326.1 648.2,330.2 647.7,318.9 647.3,309.3 646.8,301.4 646.4,295.4 646.0,291.4 645.5,289.8 645.2,289.9 644.9,290.2 644.6,290.6 644.3,291.1 644.0,291.8 643.7,292.5 643.3,293.4 642.8,295.7 642.4,299.2 641.9,303.7 641.5,309.3 641.0,315.8 640.4,309.0 639.8,303.3 639.2,298.6 638.6,295.0 638.0,292.6 637.4,291.6 637.1,291.9 636.7,292.7 636.3,293.9 635.9,295.5 635.5,297.4 635.1,299.7 634.8,300.4 634.4,302.2 634.0,304.8 633.7,308.3 633.3,312.6 633.0,317.6 632.5,310.8 632.1,305.1 631.6,300.4 631.2,296.8 630.7,294.4 630.3,293.4 630.0,293.9 629.7,295.3 629.4,297.3 629.1,299.9 628.8,303.1 628.5,306.9 628.3,307.1 628.1,307.6 627.9,308.4 627.6,309.4 627.4,310.7 627.2,312.2 627.0,312.2 626.8,312.2 626.6,312.2 626.4,312.2 626.2,312.2 626.0,312.2 625.6,308.7 625.1,305.7 624.7,303.3 624.2,301.4 623.8,300.2 623.3,299.7 622.8,300.2 622.2,301.4 621.6,303.3 621.0,305.7 620.4,308.7 619.8,312.2 619.5,313.2 619.2,315.5 618.9,318.9 618.6,323.5 618.3,329.0 618.0,335.5 617.2,323.5 616.5,313.2 615.7,304.9 615.0,298.5 614.2,294.2 613.5,292.5 613.2,293.5 612.9,296.0 612.6,299.7 612.3,304.6 612.0,310.6 611.7,317.6 611.3,310.3 610.8,304.1 610.4,299.1 609.9,295.2 609.5,292.7 609.0,291.6 608.6,291.9 608.1,292.7 607.7,293.9 607.2,295.5 606.8,297.4 606.3,299.7 605.9,300.5 605.4,302.7 605.0,305.9 604.5,310.0 604.1,315.2 603.6,321.2 603.0,314.2 602.4,308.2 601.8,303.3 601.2,299.6 600.6,297.1 600.1,296.1 599.6,296.7 599.2,298.3 598.7,300.7 598.3,303.9 597.8,307.7 597.4,312.2 597.1,309.7 596.8,307.6 596.5,305.8 596.2,304.5 595.9,303.6 595.6,303.3 595.1,300.8 594.7,298.6 594.2,296.9 593.8,295.5 593.3,294.7 592.9,294.3 592.6,294.7 592.3,295.5 592.0,296.9 591.7,298.6 591.4,300.8 591.1,303.3 590.6,304.1 590.2,306.2 589.7,309.4 589.3,313.6 588.8,318.8 588.4,324.8 587.8,317.8 587.2,311.8 586.6,306.9 586.0,303.2 585.4,300.7 584.8,299.7 584.5,300.4 584.2,302.2 583.9,304.8 583.6,308.3 583.3,312.6 583.0,317.6 582.7,315.1 582.4,313.0 582.1,311.2 581.8,309.9 581.5,309.0 581.2,308.6 580.7,302.6 580.2,297.5 579.7,293.3 579.2,290.1 578.7,288.0 578.2,287.1 577.8,287.4 577.4,287.9 577.0,288.7 576.6,289.7 576.2,291.0 575.9,292.5 575.6,293.2 575.3,295.0 575.0,297.7 574.7,301.2 574.4,305.4 574.1,310.4 573.6,306.4 573.2,303.0 572.7,300.2 572.3,298.1 571.8,296.7 571.4,296.1 570.8,296.9 570.3,298.8 569.8,301.8 569.2,305.6 568.7,310.3 568.2,315.8 567.8,314.8 567.4,314.0 567.1,313.3 566.7,312.7 566.4,312.4 566.0,312.2 566.0,309.7 566.0,307.6 566.0,305.8 566.0,304.5 566.0,303.6 566.0,303.3 565.6,300.3 565.1,297.7 564.7,295.6 564.2,294.0 563.8,292.9 563.3,292.5 562.8,293.7 562.2,296.5 561.6,300.8 561.0,306.3 560.4,313.2 559.8,321.2 559.5,318.7 559.2,316.5 558.9,314.8 558.6,313.5 558.3,312.6 558.0,312.2 557.7,307.7 557.4,303.9 557.1,300.7 556.8,298.3 556.5,296.7 556.2,296.1 555.6,297.0 555.0,299.1 554.4,302.3 553.8,306.5 553.2,311.6 552.6,317.6 551.8,309.8 551.1,303.2 550.4,297.8 549.6,293.7 548.9,290.9 548.1,289.8 547.7,290.6 547.2,292.7 546.8,295.7 546.3,299.8 545.9,304.7 545.4,310.4 545.0,304.9 544.5,300.2 544.1,296.4 543.6,293.5 543.2,291.5 542.7,290.7 542.3,290.9 541.8,291.2 541.4,291.8 540.9,292.5 540.5,293.3 540.1,294.3 539.6,294.7 539.2,295.5 538.7,296.9 538.3,298.6 537.8,300.8 537.4,303.3 536.9,303.6 536.5,304.3 536.0,305.3 535.6,306.7 535.1,308.4 534.7,310.4 534.2,310.7 533.8,311.2 533.3,312.0 532.9,313.0 532.4,314.3 532.0,315.8 531.7,316.4 531.4,317.8 531.1,319.9 530.8,322.7 530.5,326.1 530.2,330.2 529.7,318.9 529.3,309.3 528.8,301.4 528.4,295.4 528.0,291.4 527.5,289.8 527.2,289.9 526.9,290.2 526.6,290.6 526.3,291.1 526.0,291.8 525.7,292.5 525.3,293.4 524.8,295.7 524.4,299.2 523.9,303.7 523.5,309.3 523.0,315.8 522.4,309.0 521.8,303.3 521.2,298.6 520.6,295.0 520.0,292.6 519.4,291.6 519.1,291.9 518.7,292.7 518.3,293.9 517.9,295.5 517.5,297.4 517.1,299.7 516.8,300.4 516.4,302.2 516.0,304.8 515.7,308.3 515.3,312.6 515.0,317.6 514.5,310.8 514.1,305.1 513.6,300.4 513.2,296.8 512.7,294.4 512.3,293.4 512.0,293.9 511.7,295.3 511.4,297.3 511.1,299.9 510.8,303.1 510.5,306.9 510.3,307.1 510.1,307.6 509.9,308.4 509.6,309.4 509.4,310.7 509.2,312.2 509.0,312.2 508.8,312.2 508.6,312.2 508.4,312.2 508.2,312.2 508.0,312.2 507.6,308.7 507.1,305.7 506.7,303.3 506.2,301.4 505.8,300.2 505.3,299.7 504.8,300.2 504.2,301.4 503.6,303.3 503.0,305.7 502.4,308.7 501.8,312.2 501.5,313.2 501.2,315.5 500.9,318.9 500.6,323.5 500.3,329.0 500.0,335.5 499.2,323.5 498.5,313.2 497.7,304.9 497.0,298.5 496.2,294.2 495.5,292.5 495.2,293.5 494.9,296.0 494.6,299.7 494.3,304.6 494.0,310.6 493.7,317.6 493.3,310.3 492.8,304.1 492.4,299.1 491.9,295.2 491.5,292.7 491.0,291.6 490.6,291.9 490.1,292.7 489.7,293.9 489.2,295.5 488.8,297.4 488.3,299.7 487.9,300.5 487.4,302.7 487.0,305.9 486.5,310.0 486.1,315.2 485.6,321.2 485.0,314.2 484.4,308.2 483.8,303.3 483.2,299.6 482.6,297.1 482.1,296.1 481.6,296.7 481.2,298.3 480.7,300.7 480.3,303.9 479.8,307.7 479.4,312.2 479.1,309.7 478.8,307.6 478.5,305.8 478.2,304.5 477.9,303.6 477.6,303.3 477.1,300.8 476.7,298.6 476.2,296.9 475.8,295.5 475.3,294.7 474.9,294.3 474.6,294.7 474.3,295.5 474.0,296.9 473.7,298.6 473.4,300.8 473.1,303.3 472.6,304.1 472.2,306.2 471.7,309.4 471.3,313.6 470.8,318.8 470.4,324.8 469.8,317.8 469.2,311.8 468.6,306.9 468.0,303.2 467.4,300.7 466.8,299.7 466.5,300.4 466.2,302.2 465.9,304.8 465.6,308.3 465.3,312.6 465.0,317.6 464.7,315.1 464.4,313.0 464.1,311.2 463.8,309.9 463.5,309.0 463.2,308.6 462.7,302.6 462.2,297.5 461.7,293.3 461.2,290.1 460.7,288.0 460.2,287.1 459.8,287.4 459.4,287.9 459.0,288.7 458.6,289.7 458.2,291.0 457.9,292.5 457.6,293.2 457.3,295.0 457.0,297.7 456.7,301.2 456.4,305.4 456.1,310.4 455.6,306.4 455.2,303.0 454.7,300.2 454.3,298.1 453.8,296.7 453.4,296.1 452.8,296.9 452.3,298.8 451.8,301.8 451.2,305.6 450.7,310.3 450.2,315.8 449.8,314.8 449.4,314.0 449.1,313.3 448.7,312.7 448.4,312.4 448.0,312.2 448.0,309.7 448.0,307.6 448.0,305.8 448.0,304.5 448.0,303.6 448.0,303.3 447.6,300.3 447.1,297.7 446.7,295.6 446.2,294.0 445.8,292.9 445.3,292.5 444.8,293.7 444.2,296.5 443.6,300.8 443.0,306.3 442.4,313.2 441.8,321.2 441.5,318.7 441.2,316.5 440.9,314.8 440.6,313.5 440.3,312.6 440.0,312.2 439.7,307.7 439.4,303.9 439.1,300.7 438.8,298.3 438.5,296.7 438.2,296.1 437.6,297.0 437.0,299.1 436.4,302.3 435.8,306.5 435.2,311.6 434.6,317.6 433.8,309.8 433.1,303.2 432.4,297.8 431.6,293.7 430.9,290.9 430.1,289.8 429.7,290.6 429.2,292.7 428.8,295.7 428.3,299.8 427.9,304.7 427.4,310.4 427.0,304.9 426.5,300.2 426.1,296.4 425.6,293.5 425.2,291.5 424.7,290.7 424.3,290.9 423.8,291.2 423.4,291.8 422.9,292.5 422.5,293.3 422.1,294.3 421.6,294.7 421.2,295.5 420.7,296.9 420.3,298.6 419.8,300.8 419.4,303.3 418.9,303.6 418.5,304.3 418.0,305.3 417.6,306.7 417.1,308.4 416.7,310.4 416.2,310.7 415.8,311.2 415.3,312.0 414.9,313.0 414.4,314.3 414.0,315.8 413.7,316.4 413.4,317.8 413.1,319.9 412.8,322.7 412.5,326.1 412.2,330.2 411.7,318.9 411.3,309.3 410.8,301.4 410.4,295.4 410.0,291.4 409.5,289.8 409.2,289.9 408.9,290.2 408.6,290.6 408.3,291.1 408.0,291.8 407.7,292.5 407.3,293.4 406.8,295.7 406.4,299.2 405.9,303.7 405.5,309.3 405.0,315.8 404.4,309.0 403.8,303.3 403.2,298.6 402.6,295.0 402.0,292.6 401.4,291.6 401.1,291.9 400.7,292.7 400.3,293.9 399.9,295.5 399.5,297.4 399.1,299.7 398.8,300.4 398.4,302.2 398.0,304.8 397.7,308.3 397.3,312.6 397.0,317.6 396.5,310.8 396.1,305.1 395.6,300.4 395.2,296.8 394.7,294.4 394.3,293.4 394.0,293.9 393.7,295.3 393.4,297.3 393.1,299.9 392.8,303.1 392.5,306.9 392.3,307.1 392.1,307.6 391.9,308.4 391.6,309.4 391.4,310.7 391.2,312.2 391.2,312.2 391.2,312.2 391.1,312.2 391.1,312.2 391.0,312.2 391.0,312.2" fill="#90c5f6" clip-path="url(#cnr)"/>
  <polygon points="391.0,254.9 391.0,254.9 391.1,254.9 391.1,254.9 391.2,254.9 391.2,254.9 391.2,254.9 391.4,256.4 391.6,257.7 391.9,258.7 392.1,259.5 392.3,260.0 392.5,260.3 392.8,264.5 393.1,268.1 393.4,271.1 393.7,273.4 394.0,274.9 394.3,275.5 394.7,274.4 395.2,271.8 395.6,267.8 396.1,262.5 396.5,256.1 397.0,248.6 397.2,250.4 397.4,251.9 397.7,253.1 397.9,254.0 398.2,254.6 398.4,254.9 398.8,261.1 399.1,266.5 399.5,270.9 399.8,274.2 400.2,276.4 400.5,277.3 401.2,276.3 401.9,273.7 402.5,269.8 403.2,264.8 403.8,258.6 404.5,251.3 404.8,254.3 405.1,256.9 405.4,259.0 405.7,260.6 406.0,261.6 406.3,262.1 406.6,266.6 406.9,270.4 407.2,273.5 407.5,275.9 407.8,277.5 408.1,278.2 408.6,276.4 409.1,272.0 409.7,265.3 410.2,256.6 410.8,245.9 411.3,233.4 411.6,239.1 411.9,244.1 412.2,248.1 412.5,251.1 412.8,253.2 413.1,254.0 413.5,255.0 414.0,255.8 414.4,256.5 414.9,257.1 415.3,257.4 415.8,257.6 416.1,258.8 416.4,259.9 416.7,260.8 417.0,261.4 417.3,261.9 417.6,262.1 418.0,264.6 418.5,266.7 418.9,268.4 419.4,269.8 419.8,270.7 420.3,271.0 420.7,272.5 421.2,273.8 421.6,274.8 422.1,275.6 422.5,276.2 422.9,276.4 423.4,275.5 423.8,273.4 424.3,270.2 424.7,266.0 425.2,260.9 425.6,254.9 426.1,261.9 426.5,267.9 427.0,272.8 427.4,276.5 427.9,279.0 428.3,280.0 428.9,278.8 429.5,275.8 430.1,271.2 430.7,265.3 431.3,258.0 431.9,249.5 432.2,249.5 432.5,249.4 432.8,249.2 433.1,249.1 433.4,248.9 433.7,248.6 434.1,255.4 434.6,261.1 435.0,265.9 435.5,269.5 435.9,271.8 436.4,272.8 437.0,271.9 437.6,269.6 438.2,266.1 438.8,261.6 439.4,256.0 440.0,249.5 440.6,257.0 441.2,263.4 441.8,268.7 442.4,272.7 443.0,275.3 443.6,276.4 443.9,275.5 444.2,273.4 444.5,270.2 444.8,266.0 445.0,260.9 445.3,254.9 445.6,258.9 445.9,262.3 446.2,265.1 446.5,267.2 446.8,268.6 447.1,269.2 447.4,268.6 447.7,267.0 448.0,264.6 448.3,261.4 448.6,257.6 448.9,253.1 449.1,253.1 449.2,253.1 449.4,253.1 449.5,253.1 449.6,253.1 449.8,253.1 450.2,257.6 450.7,261.4 451.1,264.6 451.6,267.0 452.0,268.6 452.5,269.2 452.8,270.2 453.1,271.1 453.4,271.8 453.7,272.3 454.0,272.7 454.3,272.8 454.5,272.0 454.7,270.1 454.9,267.1 455.1,263.3 455.3,258.6 455.5,253.1 455.8,257.6 456.0,261.4 456.2,264.6 456.5,267.0 456.7,268.6 457.0,269.2 457.4,272.5 457.9,275.3 458.3,277.5 458.8,279.3 459.2,280.4 459.6,280.9 460.2,279.7 460.8,276.8 461.4,272.4 462.0,266.6 462.6,259.6 463.2,251.3 463.5,255.6 463.8,259.2 464.1,262.2 464.4,264.4 464.7,265.9 465.0,266.5 465.3,266.2 465.6,265.3 465.9,264.0 466.2,262.2 466.5,260.1 466.8,257.6 467.3,256.8 467.7,255.0 468.2,252.2 468.6,248.5 469.1,244.0 469.5,238.8 469.8,243.3 470.1,247.1 470.4,250.2 470.7,252.6 471.0,254.2 471.3,254.9 471.7,259.4 472.2,263.2 472.6,266.4 473.1,268.8 473.5,270.4 474.0,271.0 474.3,272.0 474.6,272.9 474.9,273.6 475.2,274.1 475.5,274.5 475.8,274.6 476.1,273.8 476.4,271.9 476.7,268.9 477.0,265.1 477.3,260.4 477.6,254.9 478.0,257.4 478.5,259.5 478.9,261.3 479.4,262.6 479.8,263.5 480.3,263.8 480.7,265.8 481.2,267.6 481.6,269.0 482.1,270.0 482.5,270.7 482.9,271.0 483.2,270.0 483.5,267.4 483.8,263.5 484.1,258.5 484.4,252.3 484.7,245.0 485.2,247.3 485.6,249.2 486.1,250.8 486.5,252.0 487.0,252.8 487.4,253.1 487.7,259.6 488.0,265.2 488.3,269.7 488.6,273.2 488.9,275.5 489.2,276.4 489.7,275.4 490.1,272.8 490.6,268.9 491.0,263.9 491.5,257.7 491.9,250.4 492.3,257.7 492.7,263.9 493.1,268.9 493.5,272.8 493.8,275.4 494.2,276.4 494.7,275.4 495.3,272.9 495.8,269.2 496.3,264.3 496.8,258.3 497.3,251.3 497.7,250.6 498.1,248.9 498.4,246.4 498.8,243.1 499.2,239.0 499.6,234.3 500.0,241.3 500.3,247.3 500.7,252.2 501.0,255.9 501.4,258.4 501.8,259.4 502.4,262.4 503.0,264.9 503.6,267.0 504.2,268.6 504.8,269.7 505.3,270.1 505.6,269.5 505.9,267.9 506.2,265.5 506.5,262.3 506.8,258.5 507.1,254.0 507.5,254.2 507.8,254.4 508.2,254.6 508.5,254.8 508.9,254.8 509.2,254.9 509.4,256.4 509.6,257.7 509.9,258.7 510.1,259.5 510.3,260.0 510.5,260.3 510.8,264.5 511.1,268.1 511.4,271.1 511.7,273.4 512.0,274.9 512.3,275.5 512.7,274.4 513.2,271.8 513.6,267.8 514.1,262.5 514.5,256.1 515.0,248.6 515.2,250.4 515.4,251.9 515.7,253.1 515.9,254.0 516.2,254.6 516.4,254.9 516.8,261.1 517.1,266.5 517.5,270.9 517.8,274.2 518.2,276.4 518.5,277.3 519.2,276.3 519.9,273.7 520.5,269.8 521.2,264.8 521.8,258.6 522.5,251.3 522.8,254.3 523.1,256.9 523.4,259.0 523.7,260.6 524.0,261.6 524.3,262.1 524.6,266.6 524.9,270.4 525.2,273.5 525.5,275.9 525.8,277.5 526.1,278.2 526.6,276.4 527.1,272.0 527.7,265.3 528.2,256.6 528.8,245.9 529.3,233.4 529.6,239.1 529.9,244.1 530.2,248.1 530.5,251.1 530.8,253.2 531.1,254.0 531.5,255.0 532.0,255.8 532.4,256.5 532.9,257.1 533.3,257.4 533.8,257.6 534.1,258.8 534.4,259.9 534.7,260.8 535.0,261.4 535.3,261.9 535.6,262.1 536.0,264.6 536.5,266.7 536.9,268.4 537.4,269.8 537.8,270.7 538.3,271.0 538.7,272.5 539.2,273.8 539.6,274.8 540.1,275.6 540.5,276.2 540.9,276.4 541.4,275.5 541.8,273.4 542.3,270.2 542.7,266.0 543.2,260.9 543.6,254.9 544.1,261.9 544.5,267.9 545.0,272.8 545.4,276.5 545.9,279.0 546.3,280.0 546.9,278.8 547.5,275.8 548.1,271.2 548.7,265.3 549.3,258.0 549.9,249.5 550.2,249.5 550.5,249.4 550.8,249.2 551.1,249.1 551.4,248.9 551.7,248.6 552.1,255.4 552.6,261.1 553.0,265.9 553.5,269.5 553.9,271.8 554.4,272.8 555.0,271.9 555.6,269.6 556.2,266.1 556.8,261.6 557.4,256.0 558.0,249.5 558.6,257.0 559.2,263.4 559.8,268.7 560.4,272.7 561.0,275.3 561.6,276.4 561.9,275.5 562.2,273.4 562.5,270.2 562.8,266.0 563.0,260.9 563.3,254.9 563.6,258.9 563.9,262.3 564.2,265.1 564.5,267.2 564.8,268.6 565.1,269.2 565.4,268.6 565.7,267.0 566.0,264.6 566.3,261.4 566.6,257.6 566.9,253.1 567.1,253.1 567.2,253.1 567.4,253.1 567.5,253.1 567.6,253.1 567.8,253.1 568.2,257.6 568.7,261.4 569.1,264.6 569.6,267.0 570.0,268.6 570.5,269.2 570.8,270.2 571.1,271.1 571.4,271.8 571.7,272.3 572.0,272.7 572.3,272.8 572.5,272.0 572.7,270.1 572.9,267.1 573.1,263.3 573.3,258.6 573.5,253.1 573.8,257.6 574.0,261.4 574.2,264.6 574.5,267.0 574.7,268.6 575.0,269.2 575.4,272.5 575.9,275.3 576.3,277.5 576.8,279.3 577.2,280.4 577.6,280.9 578.2,279.7 578.8,276.8 579.4,272.4 580.0,266.6 580.6,259.6 581.2,251.3 581.5,255.6 581.8,259.2 582.1,262.2 582.4,264.4 582.7,265.9 583.0,266.5 583.3,266.2 583.6,265.3 583.9,264.0 584.2,262.2 584.5,260.1 584.8,257.6 585.3,256.8 585.7,255.0 586.2,252.2 586.6,248.5 587.1,244.0 587.5,238.8 587.8,243.3 588.1,247.1 588.4,250.2 588.7,252.6 589.0,254.2 589.3,254.9 589.7,259.4 590.2,263.2 590.6,266.4 591.1,268.8 591.5,270.4 592.0,271.0 592.3,272.0 592.6,272.9 592.9,273.6 593.2,274.1 593.5,274.5 593.8,274.6 594.1,273.8 594.4,271.9 594.7,268.9 595.0,265.1 595.3,260.4 595.6,254.9 596.0,257.4 596.5,259.5 596.9,261.3 597.4,262.6 597.8,263.5 598.3,263.8 598.7,265.8 599.2,267.6 599.6,269.0 600.1,270.0 600.5,270.7 600.9,271.0 601.2,270.0 601.5,267.4 601.8,263.5 602.1,258.5 602.4,252.3 602.7,245.0 603.2,247.3 603.6,249.2 604.1,250.8 604.5,252.0 605.0,252.8 605.4,253.1 605.7,259.6 606.0,265.2 606.3,269.7 606.6,273.2 606.9,275.5 607.2,276.4 607.7,275.4 608.1,272.8 608.6,268.9 609.0,263.9 609.5,257.7 609.9,250.4 610.3,257.7 610.7,263.9 611.1,268.9 611.5,272.8 611.8,275.4 612.2,276.4 612.7,275.4 613.3,272.9 613.8,269.2 614.3,264.3 614.8,258.3 615.3,251.3 615.7,250.6 616.1,248.9 616.4,246.4 616.8,243.1 617.2,239.0 617.6,234.3 618.0,241.3 618.3,247.3 618.7,252.2 619.0,255.9 619.4,258.4 619.8,259.4 620.4,262.4 621.0,264.9 621.6,267.0 622.2,268.6 622.8,269.7 623.3,270.1 623.6,269.5 623.9,267.9 624.2,265.5 624.5,262.3 624.8,258.5 625.1,254.0 625.5,254.2 625.8,254.4 626.2,254.6 626.5,254.8 626.9,254.8 627.2,254.9 627.4,256.4 627.6,257.7 627.9,258.7 628.1,259.5 628.3,260.0 628.5,260.3 628.8,264.5 629.1,268.1 629.4,271.1 629.7,273.4 630.0,274.9 630.3,275.5 630.7,274.4 631.2,271.8 631.6,267.8 632.1,262.5 632.5,256.1 633.0,248.6 633.2,250.4 633.4,251.9 633.7,253.1 633.9,254.0 634.2,254.6 634.4,254.9 634.8,261.1 635.1,266.5 635.5,270.9 635.8,274.2 636.2,276.4 636.5,277.3 637.2,276.3 637.9,273.7 638.5,269.8 639.2,264.8 639.8,258.6 640.5,251.3 640.8,254.3 641.1,256.9 641.4,259.0 641.7,260.6 642.0,261.6 642.3,262.1 642.6,266.6 642.9,270.4 643.2,273.5 643.5,275.9 643.8,277.5 644.1,278.2 644.6,276.4 645.1,272.0 645.7,265.3 646.2,256.6 646.8,245.9 647.3,233.4 647.6,239.1 647.9,244.1 648.2,248.1 648.5,251.1 648.8,253.2 649.1,254.0 649.5,255.0 650.0,255.8 650.4,256.5 650.9,257.1 651.3,257.4 651.8,257.6 652.1,258.8 652.4,259.9 652.7,260.8 653.0,261.4 653.3,261.9 653.6,262.1 654.0,264.6 654.5,266.7 654.9,268.4 655.4,269.8 655.8,270.7 656.3,271.0 656.7,272.5 657.2,273.8 657.6,274.8 658.1,275.6 658.5,276.2 658.9,276.4 659.4,275.5 659.8,273.4 660.3,270.2 660.7,266.0 661.2,260.9 661.6,254.9 662.1,261.9 662.5,267.9 663.0,272.8 663.4,276.5 663.9,279.0 664.3,280.0 664.9,278.8 665.5,275.8 666.1,271.2 666.7,265.3 667.3,258.0 667.9,249.5 668.2,249.5 668.5,249.4 668.8,249.2 669.1,249.1 669.4,248.9 669.7,248.6 670.1,255.4 670.6,261.1 671.0,265.9 671.5,269.5 671.9,271.8 672.4,272.8 673.0,271.9 673.6,269.6 674.2,266.1 674.8,261.6 675.4,256.0 676.0,249.5 676.6,257.0 677.2,263.4 677.8,268.7 678.4,272.7 679.0,275.3 679.6,276.4 679.9,275.5 680.2,273.4 680.5,270.2 680.8,266.0 681.0,260.9 681.3,254.9 681.6,258.9 681.9,262.3 682.2,265.1 682.5,267.2 682.8,268.6 683.1,269.2 683.4,268.6 683.7,267.0 684.0,264.6 684.3,261.4 684.6,257.6 684.9,253.1 685.1,253.1 685.2,253.1 685.4,253.1 685.5,253.1 685.6,253.1 685.8,253.1 686.2,257.6 686.7,261.4 687.1,264.6 687.6,267.0 688.0,268.6 688.5,269.2 688.8,270.2 689.1,271.1 689.4,271.8 689.7,272.3 690.0,272.7 690.3,272.8 690.5,272.0 690.7,270.1 690.9,267.1 691.1,263.3 691.3,258.6 691.5,253.1 691.8,257.6 692.0,261.4 692.2,264.6 692.5,267.0 692.7,268.6 693.0,269.2 693.4,272.5 693.9,275.3 694.3,277.5 694.8,279.3 695.2,280.4 695.6,280.9 696.2,279.7 696.8,276.8 697.4,272.4 698.0,266.6 698.6,259.6 699.2,251.3 699.5,255.6 699.8,259.2 700.1,262.2 700.4,264.4 700.7,265.9 701.0,266.5 701.3,266.2 701.6,265.3 701.9,264.0 702.2,262.2 702.5,260.1 702.8,257.6 703.3,256.8 703.7,255.0 704.2,252.2 704.6,248.5 705.1,244.0 705.5,238.8 705.8,243.3 706.1,247.1 706.4,250.2 706.7,252.6 707.0,254.2 707.3,254.9 707.7,259.4 708.2,263.2 708.6,266.4 709.1,268.8 709.5,270.4 710.0,271.0 710.3,272.0 710.6,272.9 710.9,273.6 711.2,274.1 711.5,274.5 711.8,274.6 712.1,273.8 712.4,271.9 712.7,268.9 713.0,265.1 713.3,260.4 713.6,254.9 714.0,257.4 714.5,259.5 714.9,261.3 715.4,262.6 715.8,263.5 716.3,263.8 716.7,265.8 717.2,267.6 717.6,269.0 718.1,270.0 718.5,270.7 718.9,271.0 719.2,270.0 719.5,267.4 719.8,263.5 720.1,258.5 720.4,252.3 720.7,245.0 721.2,247.3 721.6,249.2 722.1,250.8 722.5,252.0 723.0,252.8 723.4,253.1 723.7,259.6 724.0,265.2 724.3,269.7 724.6,273.2 724.9,275.5 725.2,276.4 725.7,275.4 726.1,272.8 726.6,268.9 727.0,263.9 727.5,257.7 727.9,250.4 728.3,257.7 728.7,263.9 729.1,268.9 729.5,272.8 729.8,275.4 730.2,276.4 730.7,275.4 731.3,272.9 731.8,269.2 732.3,264.3 732.8,258.3 733.3,251.3 733.7,250.6 734.1,248.9 734.4,246.4 734.8,243.1 735.2,239.0 735.6,234.3 736.0,241.3 736.3,247.3 736.7,252.2 737.0,255.9 737.4,258.4 737.8,259.4 738.4,262.4 739.0,264.9 739.6,267.0 740.2,268.6 740.8,269.7 741.3,270.1 741.6,269.5 741.9,267.9 742.2,265.5 742.5,262.3 742.8,258.5 743.1,254.0 743.5,254.2 743.8,254.4 744.2,254.6 744.5,254.8 744.9,254.8 745.2,254.9 745.4,256.4 745.6,257.7 745.9,258.7 746.1,259.5 746.3,260.0 746.5,260.3 746.8,264.5 747.1,268.1 747.4,271.1 747.7,273.4 748.0,274.9 748.3,275.5 748.7,274.4 749.2,271.8 749.6,267.8 750.1,262.5 750.5,256.1 751.0,248.6 751.2,250.4 751.4,251.9 751.7,253.1 751.9,254.0 752.2,254.6 752.4,254.9 752.8,261.1 753.1,266.5 753.5,270.9 753.8,274.2 754.2,276.4 754.5,277.3 755.2,276.3 755.9,273.7 756.5,269.8 757.2,264.8 757.8,258.6 758.5,251.3 758.8,254.3 759.1,256.9 759.4,259.0 759.7,260.6 760.0,261.6 760.3,262.1 760.6,266.6 760.9,270.4 761.2,273.5 761.5,275.9 761.8,277.5 762.1,278.2 762.6,276.4 763.1,272.0 763.7,265.3 764.2,256.6 764.8,245.9 765.3,233.4 765.6,239.1 765.9,244.1 766.2,248.1 766.5,251.1 766.8,253.2 767.1,254.0 767.5,255.0 768.0,255.8 768.4,256.5 768.9,257.1 769.3,257.4 769.8,257.6 770.1,258.8 770.4,259.9 770.7,260.8 771.0,261.4 771.3,261.9 771.6,262.1 772.0,264.6 772.5,266.7 772.9,268.4 773.4,269.8 773.8,270.7 774.3,271.0 774.7,272.5 775.2,273.8 775.6,274.8 776.1,275.6 776.5,276.2 776.9,276.4 777.4,275.5 777.8,273.4 778.3,270.2 778.7,266.0 779.2,260.9 779.6,254.9 778.7,290.7 778.3,290.9 777.8,291.2 777.4,291.8 776.9,292.5 776.5,293.3 776.1,294.3 775.6,294.7 775.2,295.5 774.7,296.9 774.3,298.6 773.8,300.8 773.4,303.3 772.9,303.6 772.5,304.3 772.0,305.3 771.6,306.7 771.1,308.4 770.7,310.4 770.2,310.7 769.8,311.2 769.3,312.0 768.9,313.0 768.4,314.3 768.0,315.8 767.7,316.4 767.4,317.8 767.1,319.9 766.8,322.7 766.5,326.1 766.2,330.2 765.7,318.9 765.3,309.3 764.8,301.4 764.4,295.4 764.0,291.4 763.5,289.8 763.2,289.9 762.9,290.2 762.6,290.6 762.3,291.1 762.0,291.8 761.7,292.5 761.3,293.4 760.8,295.7 760.4,299.2 759.9,303.7 759.5,309.3 759.0,315.8 758.4,309.0 757.8,303.3 757.2,298.6 756.6,295.0 756.0,292.6 755.4,291.6 755.1,291.9 754.7,292.7 754.3,293.9 753.9,295.5 753.5,297.4 753.1,299.7 752.8,300.4 752.4,302.2 752.0,304.8 751.7,308.3 751.3,312.6 751.0,317.6 750.5,310.8 750.1,305.1 749.6,300.4 749.2,296.8 748.7,294.4 748.3,293.4 748.0,293.9 747.7,295.3 747.4,297.3 747.1,299.9 746.8,303.1 746.5,306.9 746.3,307.1 746.1,307.6 745.9,308.4 745.6,309.4 745.4,310.7 745.2,312.2 745.0,312.2 744.8,312.2 744.6,312.2 744.4,312.2 744.2,312.2 744.0,312.2 743.6,308.7 743.1,305.7 742.7,303.3 742.2,301.4 741.8,300.2 741.3,299.7 740.8,300.2 740.2,301.4 739.6,303.3 739.0,305.7 738.4,308.7 737.8,312.2 737.5,313.2 737.2,315.5 736.9,318.9 736.6,323.5 736.3,329.0 736.0,335.5 735.2,323.5 734.5,313.2 733.7,304.9 733.0,298.5 732.2,294.2 731.5,292.5 731.2,293.5 730.9,296.0 730.6,299.7 730.3,304.6 730.0,310.6 729.7,317.6 729.3,310.3 728.8,304.1 728.4,299.1 727.9,295.2 727.5,292.7 727.0,291.6 726.6,291.9 726.1,292.7 725.7,293.9 725.2,295.5 724.8,297.4 724.3,299.7 723.9,300.5 723.4,302.7 723.0,305.9 722.5,310.0 722.1,315.2 721.6,321.2 721.0,314.2 720.4,308.2 719.8,303.3 719.2,299.6 718.6,297.1 718.1,296.1 717.6,296.7 717.2,298.3 716.7,300.7 716.3,303.9 715.8,307.7 715.4,312.2 715.1,309.7 714.8,307.6 714.5,305.8 714.2,304.5 713.9,303.6 713.6,303.3 713.1,300.8 712.7,298.6 712.2,296.9 711.8,295.5 711.3,294.7 710.9,294.3 710.6,294.7 710.3,295.5 710.0,296.9 709.7,298.6 709.4,300.8 709.1,303.3 708.6,304.1 708.2,306.2 707.7,309.4 707.3,313.6 706.8,318.8 706.4,324.8 705.8,317.8 705.2,311.8 704.6,306.9 704.0,303.2 703.4,300.7 702.8,299.7 702.5,300.4 702.2,302.2 701.9,304.8 701.6,308.3 701.3,312.6 701.0,317.6 700.7,315.1 700.4,313.0 700.1,311.2 699.8,309.9 699.5,309.0 699.2,308.6 698.7,302.6 698.2,297.5 697.7,293.3 697.2,290.1 696.7,288.0 696.2,287.1 695.8,287.4 695.4,287.9 695.0,288.7 694.6,289.7 694.2,291.0 693.9,292.5 693.6,293.2 693.3,295.0 693.0,297.7 692.7,301.2 692.4,305.4 692.1,310.4 691.6,306.4 691.2,303.0 690.7,300.2 690.3,298.1 689.8,296.7 689.4,296.1 688.8,296.9 688.3,298.8 687.8,301.8 687.2,305.6 686.7,310.3 686.2,315.8 685.8,314.8 685.4,314.0 685.1,313.3 684.7,312.7 684.4,312.4 684.0,312.2 684.0,309.7 684.0,307.6 684.0,305.8 684.0,304.5 684.0,303.6 684.0,303.3 683.6,300.3 683.1,297.7 682.7,295.6 682.2,294.0 681.8,292.9 681.3,292.5 680.8,293.7 680.2,296.5 679.6,300.8 679.0,306.3 678.4,313.2 677.8,321.2 677.5,318.7 677.2,316.5 676.9,314.8 676.6,313.5 676.3,312.6 676.0,312.2 675.7,307.7 675.4,303.9 675.1,300.7 674.8,298.3 674.5,296.7 674.2,296.1 673.6,297.0 673.0,299.1 672.4,302.3 671.8,306.5 671.2,311.6 670.6,317.6 669.8,309.8 669.1,303.2 668.4,297.8 667.6,293.7 666.9,290.9 666.1,289.8 665.7,290.6 665.2,292.7 664.8,295.7 664.3,299.8 663.9,304.7 663.4,310.4 663.0,304.9 662.5,300.2 662.1,296.4 661.6,293.5 661.2,291.5 660.7,290.7 660.3,290.9 659.8,291.2 659.4,291.8 658.9,292.5 658.5,293.3 658.1,294.3 657.6,294.7 657.2,295.5 656.7,296.9 656.3,298.6 655.8,300.8 655.4,303.3 654.9,303.6 654.5,304.3 654.0,305.3 653.6,306.7 653.1,308.4 652.7,310.4 652.2,310.7 651.8,311.2 651.3,312.0 650.9,313.0 650.4,314.3 650.0,315.8 649.7,316.4 649.4,317.8 649.1,319.9 648.8,322.7 648.5,326.1 648.2,330.2 647.7,318.9 647.3,309.3 646.8,301.4 646.4,295.4 646.0,291.4 645.5,289.8 645.2,289.9 644.9,290.2 644.6,290.6 644.3,291.1 644.0,291.8 643.7,292.5 643.3,293.4 642.8,295.7 642.4,299.2 641.9,303.7 641.5,309.3 641.0,315.8 640.4,309.0 639.8,303.3 639.2,298.6 638.6,295.0 638.0,292.6 637.4,291.6 637.1,291.9 636.7,292.7 636.3,293.9 635.9,295.5 635.5,297.4 635.1,299.7 634.8,300.4 634.4,302.2 634.0,304.8 633.7,308.3 633.3,312.6 633.0,317.6 632.5,310.8 632.1,305.1 631.6,300.4 631.2,296.8 630.7,294.4 630.3,293.4 630.0,293.9 629.7,295.3 629.4,297.3 629.1,299.9 628.8,303.1 628.5,306.9 628.3,307.1 628.1,307.6 627.9,308.4 627.6,309.4 627.4,310.7 627.2,312.2 627.0,312.2 626.8,312.2 626.6,312.2 626.4,312.2 626.2,312.2 626.0,312.2 625.6,308.7 625.1,305.7 624.7,303.3 624.2,301.4 623.8,300.2 623.3,299.7 622.8,300.2 622.2,301.4 621.6,303.3 621.0,305.7 620.4,308.7 619.8,312.2 619.5,313.2 619.2,315.5 618.9,318.9 618.6,323.5 618.3,329.0 618.0,335.5 617.2,323.5 616.5,313.2 615.7,304.9 615.0,298.5 614.2,294.2 613.5,292.5 613.2,293.5 612.9,296.0 612.6,299.7 612.3,304.6 612.0,310.6 611.7,317.6 611.3,310.3 610.8,304.1 610.4,299.1 609.9,295.2 609.5,292.7 609.0,291.6 608.6,291.9 608.1,292.7 607.7,293.9 607.2,295.5 606.8,297.4 606.3,299.7 605.9,300.5 605.4,302.7 605.0,305.9 604.5,310.0 604.1,315.2 603.6,321.2 603.0,314.2 602.4,308.2 601.8,303.3 601.2,299.6 600.6,297.1 600.1,296.1 599.6,296.7 599.2,298.3 598.7,300.7 598.3,303.9 597.8,307.7 597.4,312.2 597.1,309.7 596.8,307.6 596.5,305.8 596.2,304.5 595.9,303.6 595.6,303.3 595.1,300.8 594.7,298.6 594.2,296.9 593.8,295.5 593.3,294.7 592.9,294.3 592.6,294.7 592.3,295.5 592.0,296.9 591.7,298.6 591.4,300.8 591.1,303.3 590.6,304.1 590.2,306.2 589.7,309.4 589.3,313.6 588.8,318.8 588.4,324.8 587.8,317.8 587.2,311.8 586.6,306.9 586.0,303.2 585.4,300.7 584.8,299.7 584.5,300.4 584.2,302.2 583.9,304.8 583.6,308.3 583.3,312.6 583.0,317.6 582.7,315.1 582.4,313.0 582.1,311.2 581.8,309.9 581.5,309.0 581.2,308.6 580.7,302.6 580.2,297.5 579.7,293.3 579.2,290.1 578.7,288.0 578.2,287.1 577.8,287.4 577.4,287.9 577.0,288.7 576.6,289.7 576.2,291.0 575.9,292.5 575.6,293.2 575.3,295.0 575.0,297.7 574.7,301.2 574.4,305.4 574.1,310.4 573.6,306.4 573.2,303.0 572.7,300.2 572.3,298.1 571.8,296.7 571.4,296.1 570.8,296.9 570.3,298.8 569.8,301.8 569.2,305.6 568.7,310.3 568.2,315.8 567.8,314.8 567.4,314.0 567.1,313.3 566.7,312.7 566.4,312.4 566.0,312.2 566.0,309.7 566.0,307.6 566.0,305.8 566.0,304.5 566.0,303.6 566.0,303.3 565.6,300.3 565.1,297.7 564.7,295.6 564.2,294.0 563.8,292.9 563.3,292.5 562.8,293.7 562.2,296.5 561.6,300.8 561.0,306.3 560.4,313.2 559.8,321.2 559.5,318.7 559.2,316.5 558.9,314.8 558.6,313.5 558.3,312.6 558.0,312.2 557.7,307.7 557.4,303.9 557.1,300.7 556.8,298.3 556.5,296.7 556.2,296.1 555.6,297.0 555.0,299.1 554.4,302.3 553.8,306.5 553.2,311.6 552.6,317.6 551.8,309.8 551.1,303.2 550.4,297.8 549.6,293.7 548.9,290.9 548.1,289.8 547.7,290.6 547.2,292.7 546.8,295.7 546.3,299.8 545.9,304.7 545.4,310.4 545.0,304.9 544.5,300.2 544.1,296.4 543.6,293.5 543.2,291.5 542.7,290.7 542.3,290.9 541.8,291.2 541.4,291.8 540.9,292.5 540.5,293.3 540.1,294.3 539.6,294.7 539.2,295.5 538.7,296.9 538.3,298.6 537.8,300.8 537.4,303.3 536.9,303.6 536.5,304.3 536.0,305.3 535.6,306.7 535.1,308.4 534.7,310.4 534.2,310.7 533.8,311.2 533.3,312.0 532.9,313.0 532.4,314.3 532.0,315.8 531.7,316.4 531.4,317.8 531.1,319.9 530.8,322.7 530.5,326.1 530.2,330.2 529.7,318.9 529.3,309.3 528.8,301.4 528.4,295.4 528.0,291.4 527.5,289.8 527.2,289.9 526.9,290.2 526.6,290.6 526.3,291.1 526.0,291.8 525.7,292.5 525.3,293.4 524.8,295.7 524.4,299.2 523.9,303.7 523.5,309.3 523.0,315.8 522.4,309.0 521.8,303.3 521.2,298.6 520.6,295.0 520.0,292.6 519.4,291.6 519.1,291.9 518.7,292.7 518.3,293.9 517.9,295.5 517.5,297.4 517.1,299.7 516.8,300.4 516.4,302.2 516.0,304.8 515.7,308.3 515.3,312.6 515.0,317.6 514.5,310.8 514.1,305.1 513.6,300.4 513.2,296.8 512.7,294.4 512.3,293.4 512.0,293.9 511.7,295.3 511.4,297.3 511.1,299.9 510.8,303.1 510.5,306.9 510.3,307.1 510.1,307.6 509.9,308.4 509.6,309.4 509.4,310.7 509.2,312.2 509.0,312.2 508.8,312.2 508.6,312.2 508.4,312.2 508.2,312.2 508.0,312.2 507.6,308.7 507.1,305.7 506.7,303.3 506.2,301.4 505.8,300.2 505.3,299.7 504.8,300.2 504.2,301.4 503.6,303.3 503.0,305.7 502.4,308.7 501.8,312.2 501.5,313.2 501.2,315.5 500.9,318.9 500.6,323.5 500.3,329.0 500.0,335.5 499.2,323.5 498.5,313.2 497.7,304.9 497.0,298.5 496.2,294.2 495.5,292.5 495.2,293.5 494.9,296.0 494.6,299.7 494.3,304.6 494.0,310.6 493.7,317.6 493.3,310.3 492.8,304.1 492.4,299.1 491.9,295.2 491.5,292.7 491.0,291.6 490.6,291.9 490.1,292.7 489.7,293.9 489.2,295.5 488.8,297.4 488.3,299.7 487.9,300.5 487.4,302.7 487.0,305.9 486.5,310.0 486.1,315.2 485.6,321.2 485.0,314.2 484.4,308.2 483.8,303.3 483.2,299.6 482.6,297.1 482.1,296.1 481.6,296.7 481.2,298.3 480.7,300.7 480.3,303.9 479.8,307.7 479.4,312.2 479.1,309.7 478.8,307.6 478.5,305.8 478.2,304.5 477.9,303.6 477.6,303.3 477.1,300.8 476.7,298.6 476.2,296.9 475.8,295.5 475.3,294.7 474.9,294.3 474.6,294.7 474.3,295.5 474.0,296.9 473.7,298.6 473.4,300.8 473.1,303.3 472.6,304.1 472.2,306.2 471.7,309.4 471.3,313.6 470.8,318.8 470.4,324.8 469.8,317.8 469.2,311.8 468.6,306.9 468.0,303.2 467.4,300.7 466.8,299.7 466.5,300.4 466.2,302.2 465.9,304.8 465.6,308.3 465.3,312.6 465.0,317.6 464.7,315.1 464.4,313.0 464.1,311.2 463.8,309.9 463.5,309.0 463.2,308.6 462.7,302.6 462.2,297.5 461.7,293.3 461.2,290.1 460.7,288.0 460.2,287.1 459.8,287.4 459.4,287.9 459.0,288.7 458.6,289.7 458.2,291.0 457.9,292.5 457.6,293.2 457.3,295.0 457.0,297.7 456.7,301.2 456.4,305.4 456.1,310.4 455.6,306.4 455.2,303.0 454.7,300.2 454.3,298.1 453.8,296.7 453.4,296.1 452.8,296.9 452.3,298.8 451.8,301.8 451.2,305.6 450.7,310.3 450.2,315.8 449.8,314.8 449.4,314.0 449.1,313.3 448.7,312.7 448.4,312.4 448.0,312.2 448.0,309.7 448.0,307.6 448.0,305.8 448.0,304.5 448.0,303.6 448.0,303.3 447.6,300.3 447.1,297.7 446.7,295.6 446.2,294.0 445.8,292.9 445.3,292.5 444.8,293.7 444.2,296.5 443.6,300.8 443.0,306.3 442.4,313.2 441.8,321.2 441.5,318.7 441.2,316.5 440.9,314.8 440.6,313.5 440.3,312.6 440.0,312.2 439.7,307.7 439.4,303.9 439.1,300.7 438.8,298.3 438.5,296.7 438.2,296.1 437.6,297.0 437.0,299.1 436.4,302.3 435.8,306.5 435.2,311.6 434.6,317.6 433.8,309.8 433.1,303.2 432.4,297.8 431.6,293.7 430.9,290.9 430.1,289.8 429.7,290.6 429.2,292.7 428.8,295.7 428.3,299.8 427.9,304.7 427.4,310.4 427.0,304.9 426.5,300.2 426.1,296.4 425.6,293.5 425.2,291.5 424.7,290.7 424.3,290.9 423.8,291.2 423.4,291.8 422.9,292.5 422.5,293.3 422.1,294.3 421.6,294.7 421.2,295.5 420.7,296.9 420.3,298.6 419.8,300.8 419.4,303.3 418.9,303.6 418.5,304.3 418.0,305.3 417.6,306.7 417.1,308.4 416.7,310.4 416.2,310.7 415.8,311.2 415.3,312.0 414.9,313.0 414.4,314.3 414.0,315.8 413.7,316.4 413.4,317.8 413.1,319.9 412.8,322.7 412.5,326.1 412.2,330.2 411.7,318.9 411.3,309.3 410.8,301.4 410.4,295.4 410.0,291.4 409.5,289.8 409.2,289.9 408.9,290.2 408.6,290.6 408.3,291.1 408.0,291.8 407.7,292.5 407.3,293.4 406.8,295.7 406.4,299.2 405.9,303.7 405.5,309.3 405.0,315.8 404.4,309.0 403.8,303.3 403.2,298.6 402.6,295.0 402.0,292.6 401.4,291.6 401.1,291.9 400.7,292.7 400.3,293.9 399.9,295.5 399.5,297.4 399.1,299.7 398.8,300.4 398.4,302.2 398.0,304.8 397.7,308.3 397.3,312.6 397.0,317.6 396.5,310.8 396.1,305.1 395.6,300.4 395.2,296.8 394.7,294.4 394.3,293.4 394.0,293.9 393.7,295.3 393.4,297.3 393.1,299.9 392.8,303.1 392.5,306.9 392.3,307.1 392.1,307.6 391.9,308.4 391.6,309.4 391.4,310.7 391.2,312.2 391.2,312.2 391.2,312.2 391.1,312.2 391.1,312.2 391.0,312.2 391.0,312.2" fill="#ffffff" clip-path="url(#cwh)"/>
  <!-- handles -->
  <path d="M390,261 V308 H372 A6.5,6.5 0 0 1 365.5,301.5 V267.5 A6.5,6.5 0 0 1 372,261 Z" fill="#3f8ef5"/>
  <rect x="375.4" y="277" width="1.2" height="15.5" fill="#d9e8fb"/>
  <rect x="378.6" y="277" width="1.2" height="15.5" fill="#d9e8fb"/>
  <path d="M622,261 V308 H641.5 A6.5,6.5 0 0 0 648,301.5 V267.5 A6.5,6.5 0 0 0 641.5,261 Z" fill="#3f8ef5"/>
  <rect x="632.6" y="277" width="1.2" height="15.5" fill="#d9e8fb"/>
  <rect x="635.8" y="277" width="1.2" height="15.5" fill="#d9e8fb"/>
  <!-- red brackets -->
  <g fill="#e0192d">
    <rect x="369.5" y="341.5" width="19.5" height="44.2" rx="6"/>
    <rect x="380" y="341.5" width="16" height="11.2" rx="5.6"/>
    <rect x="380" y="374.5" width="15" height="11.2" rx="5.6"/>
    <path d="M630,337 H638 A6,6 0 0 1 644.2,343 V380 A6.5,6.5 0 0 1 637.7,386.7 H624 L621.8,345 Z"/>
    <rect x="614.9" y="340.7" width="20" height="11.2" rx="5.6"/>
    <rect x="617.1" y="375.5" width="20" height="11.2" rx="5.6"/>
  </g>
  <!-- playhead -->
  <rect x="49" y="107.7" width="4.2" height="323.8" fill="#c84b4f"/>

  <!-- undo / redo -->
  <g fill="none" stroke-width="2" stroke-linecap="round" stroke-linejoin="round">
    <path d="M30.75,43.75 L23.5,50.25 L30.75,57.25 M23.5,50.25 H36.5 A6,6 0 0 1 36.5,62.25 H33" stroke="#f0a04c"/>
    <path d="M90.5,44 L97.75,50.25 L90.5,57 M97.75,50.25 H84.5 A6,6 0 0 0 84.5,62.25 H88.5" stroke="#6b6b6d"/>
    <path d="M714.5,45.25 V61.5 M706,53.5 H723" stroke="#f0a04c"/>
    <path d="M758.75,54.5 L764.75,61.25 L775.75,45.25" stroke="#f0a04c"/>
  </g>
</svg>

<!-- control buttons -->
<div class="btn" style="left:27.6px;top:445.7px;width:43.8px;height:31.5px"></div>
<div class="btn" style="left:75.8px;top:445.7px;width:43.4px;height:31.8px"></div>
<div class="btn" style="left:147px;top:444.1px;width:45.9px;height:34.5px;border-radius:17.25px"></div>
<div class="a" style="left:362.8px;top:439.5px;width:74.2px;height:43.5px;background:#66cb67;border-radius:21.75px"></div>
<div class="btn" style="left:636.4px;top:446.6px;width:38.6px;height:29.2px;border-radius:14.6px"></div>
<div class="a" style="left:679.6px;top:445.6px;width:41.2px;height:32px;background:#f0984a;border-radius:16px"></div>
<div class="btn" style="left:725px;top:446px;width:47.3px;height:30.8px;border-radius:15.4px"></div>
<svg width="800" height="625" viewBox="0 0 800 625">
  <g fill="none" stroke="#f0994a" stroke-linecap="round">
    <circle cx="47.9" cy="460" r="5.7" stroke-width="1.8"/>
    <path d="M52.2,464.4 L56.9,469 M45.3,460.2 H50.6" stroke-width="1.8"/>
    <circle cx="95.8" cy="459.9" r="5.6" stroke-width="1.8"/>
    <path d="M100,464.2 L104.6,469 M93,460.1 H98.6 M95.8,457.4 V462.8" stroke-width="1.8"/>
    <path d="M169.77,463.90 A3.75,3.75 0 0 1 168.15,457.65 L171.05,454.75 A3.75,3.75 0 0 1 176.35,460.05 L174.61,461.79" stroke-width="1.6"/>
    <path d="M164.65,461.05 L163.05,462.65 A3.75,3.75 0 0 0 168.35,467.95 L171.55,464.75 A3.75,3.75 0 0 0 169.03,458.35" stroke-width="1.6"/>
    <path d="M650.4,460.5 V462.5 M652.5,457.9 V465.1 M654.8,455.6 V467.4 M659.3,456.9 V466.1 M661.5,460.5 V462.8" stroke-width="1.6"/>
    <path d="M657.1,459.2 V463.8" stroke-width="2" stroke-opacity="0.6"/>
    <rect x="739.75" y="454.9" width="17.5" height="13.6" rx="2.4" stroke-width="1.7"/>
    <path d="M745.6,455 V468.5 M751.6,455 V468.5" stroke-width="1.6"/>
  </g>
  <g fill="none" stroke="#fff" stroke-width="1.4" stroke-linecap="round">
    <circle cx="700.2" cy="461.8" r="5.3"/>
    <path d="M700.2,454.5 V458 M700.2,465.4 V469.2 M692.8,461.8 H696.6 M703.6,461.8 H707.5"/>
  </g>
  <path d="M393.5,454.5 Q393.5,452.8 395,453.6 L408,460.6 Q409.3,461.4 408,462.2 L395,469.4 Q393.5,470.2 393.5,468.5 Z" fill="#fff"/>
</svg>

<!-- bottom card -->
<div class="card" style="left:8px;top:506px;width:784px;height:140px"></div>
<div class="txt" style="left:27px;top:521px;font-size:20.3px;color:#f0984a;-webkit-text-stroke:0">Aa</div>
<div class="txt" style="left:67.5px;top:524px;font-size:16px;color:#f2f2f2">Name</div>
<div class="a" style="left:67px;top:556px;width:705px;height:1px;background:#38383a"></div>
<div class="txt" style="left:67.5px;top:579px;font-size:16px;color:#f2f2f2">Color</div>
<div class="a" style="left:67px;top:614px;width:705px;height:1px;background:#38383a"></div>
<div class="txt" style="left:682.5px;top:524px;font-size:16px;color:#f0984a">New Region</div>
<div class="a" style="left:771px;top:521px;width:1.6px;height:21.5px;background:#f0984a"></div>
<div class="a" style="left:724px;top:572px;width:48.3px;height:27.7px;background:#3d8ef0;border-radius:6px"></div>
<svg width="800" height="625" viewBox="0 0 800 625">
  <g fill="none" stroke="#f0984a" stroke-width="1.8">
    <path d="M45.8,588.2 C49,587 52.5,585 51.3,581 C49.5,576 42,576 38,577 C31,578.5 27.5,582.5 27.5,587 C27.5,592 33,596 40,596.2 C45,596.3 47.5,594.5 47,592.5 C46.5,590.5 44,590 45.8,588.2 Z"/>
    <circle cx="39.4" cy="589.4" r="2.3" stroke-width="1.3"/>
  </g>
  <g fill="#f0984a">
    <circle cx="35.6" cy="582.3" r="2.2"/><circle cx="40.9" cy="581" r="1.9"/>
    <circle cx="45.8" cy="582.1" r="1.6"/><circle cx="32" cy="586.1" r="1.8"/>
  </g>
  <!-- wifi -->
  <g fill="none" stroke="#f2f2f2" stroke-width="1.9" stroke-linecap="round">
    <path d="M708.6,14.4 A9.5,9.5 0 0 1 721.8,14.4"/>
    <path d="M711.1,17 A6,6 0 0 1 719.3,17"/>
  </g>
  <path d="M713.2,19.2 A3,3 0 0 1 717.2,19.2 L715.2,21 Z" fill="#f2f2f2"/>
  <!-- battery -->
  <rect x="768.95" y="9.7" width="22.8" height="11.6" rx="3.3" fill="none" stroke="#4d4d4f" stroke-width="1.3"/>
  <rect x="769.9" y="10.9" width="21.1" height="9.4" rx="2.2" fill="#5cc365"/>
  <path d="M793.7,13.8 Q795.1,14 795.1,15.7 Q795.1,17.4 793.7,17.6 Z" fill="#4d4d4f"/>
  <path d="M782.6,9.0 L775.0,16.5 H779.2 L778.0,22.4 L785.1,14.5 H781.0 Z" fill="#fff" stroke="#000" stroke-width="2" stroke-linejoin="round" paint-order="stroke"/>
  <rect x="0" y="0" width="1" height="1" fill="#fff"/>
  <rect x="799" y="0" width="1" height="1" fill="#fff"/>
</svg>
</body></html>
